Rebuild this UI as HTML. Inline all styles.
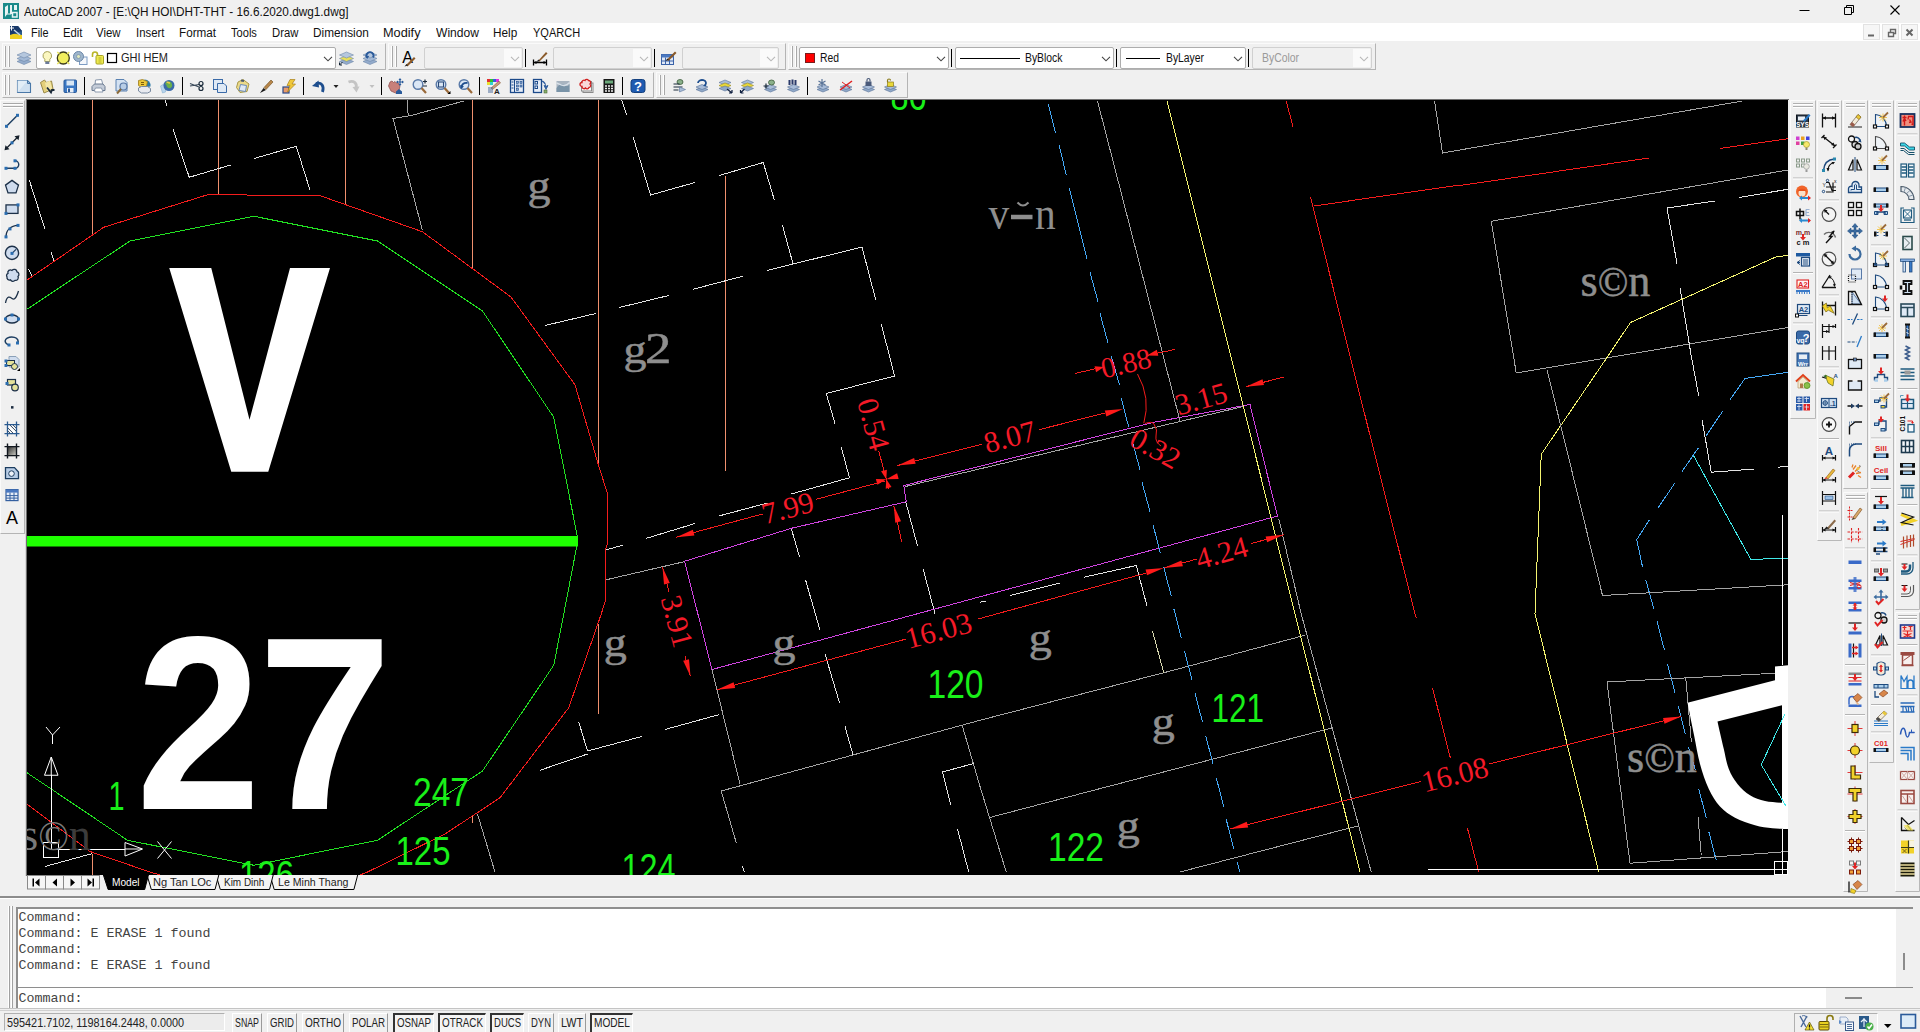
<!DOCTYPE html>
<html><head><meta charset="utf-8"><title>AutoCAD 2007</title>
<style>
html,body{margin:0;padding:0;}
body{width:1920px;height:1032px;overflow:hidden;background:#f0f0f0;position:relative;font-family:"Liberation Sans",sans-serif;}
.t{position:absolute;white-space:pre;line-height:normal;transform-origin:0 50%;display:block;}
.a{position:absolute;}
.dd{position:absolute;background:#fff;border:1px solid #adadad;box-sizing:border-box;border-radius:2px;}
.dd.dis{background:#f0f0f0;border-color:#d0d0d0;}
.sep{position:absolute;width:2px;background:#000;}
.grip{position:absolute;width:2px;border-left:1px solid #fff;border-right:1px solid #a0a0a0;box-sizing:border-box;width:3px;}
svg{position:absolute;overflow:visible;}
.fsa{font-family:"Liberation Sans",sans-serif;}
.fse{font-family:"Liberation Serif",serif;}
.fmo{font-family:"Liberation Mono",monospace;}

</style></head>
<body>
<div class="a" style="left:0;top:0;width:1920px;height:23px;background:#f0f0f0"></div>
<span class="t fsa" style="left:24.30px;top:4.74px;font-size:12px;font-weight:400;color:#111;transform:scaleX(0.9816);">AutoCAD 2007 - [E:\QH HOI\DHT-THT - 16.6.2020.dwg1.dwg]</span>
<svg style="left:1790px;top:0" width="130" height="22" viewBox="0 0 130 22"><path d="M9.5 10.5h10" stroke="#000" stroke-width="1" fill="none"/><path d="M54.5 7.5h7v7h-7z M56.5 7.5v-2h7v7h-2" stroke="#000" stroke-width="1" fill="none"/><path d="M100.5 5.5l9 9M109.5 5.5l-9 9" stroke="#000" stroke-width="1.1" fill="none"/></svg>
<div class="a" style="left:0;top:23px;width:1920px;height:18px;background:#fff"></div>
<span class="t fsa" style="left:30.50px;top:25.84px;font-size:12px;font-weight:400;color:#111;transform:scaleX(0.9050);">File</span>
<span class="t fsa" style="left:62.50px;top:25.84px;font-size:12px;font-weight:400;color:#111;transform:scaleX(0.9430);">Edit</span>
<span class="t fsa" style="left:96.30px;top:25.84px;font-size:12px;font-weight:400;color:#111;transform:scaleX(0.9499);">View</span>
<span class="t fsa" style="left:135.80px;top:25.84px;font-size:12px;font-weight:400;color:#111;transform:scaleX(0.9463);">Insert</span>
<span class="t fsa" style="left:178.70px;top:25.84px;font-size:12px;font-weight:400;color:#111;transform:scaleX(0.9762);">Format</span>
<span class="t fsa" style="left:230.80px;top:25.84px;font-size:12px;font-weight:400;color:#111;transform:scaleX(0.9245);">Tools</span>
<span class="t fsa" style="left:271.70px;top:25.84px;font-size:12px;font-weight:400;color:#111;transform:scaleX(0.9392);">Draw</span>
<span class="t fsa" style="left:312.50px;top:25.84px;font-size:12px;font-weight:400;color:#111;transform:scaleX(0.9843);">Dimension</span>
<span class="t fsa" style="left:383.30px;top:25.84px;font-size:12px;font-weight:400;color:#111;transform:scaleX(1.0610);">Modify</span>
<span class="t fsa" style="left:435.80px;top:25.84px;font-size:12px;font-weight:400;color:#111;transform:scaleX(1.0052);">Window</span>
<span class="t fsa" style="left:493.30px;top:25.84px;font-size:12px;font-weight:400;color:#111;transform:scaleX(0.9806);">Help</span>
<span class="t fsa" style="left:532.50px;top:25.84px;font-size:12px;font-weight:400;color:#111;transform:scaleX(0.9194);">YQARCH</span>
<svg style="left:1860px;top:23px" width="60" height="18" viewBox="0 0 60 18"><rect x="3.5" y="1.5" width="16" height="15" fill="#f6f6f6" stroke="#e2e2e2"/><rect x="22.5" y="1.5" width="16" height="15" fill="#f6f6f6" stroke="#e2e2e2"/><rect x="41.5" y="1.5" width="16" height="15" fill="#f6f6f6" stroke="#e2e2e2"/><path d="M8 12.5h6" stroke="#666" stroke-width="2"/><path d="M28.5 9.5h5v4h-5z M30.5 9v-2.5h5v4h-2" stroke="#666" stroke-width="1.4" fill="none"/><path d="M46.5 6.5l6 6M52.5 6.5l-6 6" stroke="#666" stroke-width="2"/></svg>
<div class="a" style="left:2px;top:43px;width:384px;height:27px;box-sizing:border-box;border-right:1px solid #b4b4b4;border-bottom:1px solid #b4b4b4;border-left:1px solid #fafafa;border-top:1px solid #fafafa"></div>
<div class="a" style="left:4px;top:46px;width:1px;height:21px;background:#fff"></div><div class="a" style="left:5px;top:46px;width:1px;height:21px;background:#a8a8a8"></div><div class="a" style="left:8px;top:46px;width:1px;height:21px;background:#fff"></div><div class="a" style="left:9px;top:46px;width:1px;height:21px;background:#a8a8a8"></div>
<div class="dd" style="left:36px;top:47px;width:300px;height:22px"></div>
<svg style="left:322.5px;top:55.5px" width="10" height="6" viewBox="0 0 10 6"><path d="M1 0.8l4 4l4-4" stroke="#444" stroke-width="1.1" fill="none"/></svg>
<span class="t fsa" style="left:121.00px;top:51.14px;font-size:12px;font-weight:400;color:#222;transform:scaleX(0.9156);">GHI HEM</span>
<div class="a" style="left:388px;top:43px;width:398px;height:27px;box-sizing:border-box;border-right:1px solid #b4b4b4;border-bottom:1px solid #b4b4b4;border-left:1px solid #fafafa;border-top:1px solid #fafafa"></div>
<div class="a" style="left:391px;top:46px;width:1px;height:21px;background:#fff"></div><div class="a" style="left:392px;top:46px;width:1px;height:21px;background:#a8a8a8"></div><div class="a" style="left:395px;top:46px;width:1px;height:21px;background:#fff"></div><div class="a" style="left:396px;top:46px;width:1px;height:21px;background:#a8a8a8"></div>
<div class="dd dis" style="left:424px;top:47px;width:99px;height:22px"></div>
<div class="a" style="left:504px;top:49px;width:17px;height:18px;background:#fafafa"></div>
<svg style="left:509.5px;top:55.5px" width="10" height="6" viewBox="0 0 10 6"><path d="M1 0.8l4 4l4-4" stroke="#b8b8b8" stroke-width="1.1" fill="none"/></svg>
<div class="a" style="left:525px;top:49px;width:1px;height:18px;background:#000"></div>
<div class="dd dis" style="left:553px;top:47px;width:99px;height:22px"></div>
<div class="a" style="left:633px;top:49px;width:17px;height:18px;background:#fafafa"></div>
<svg style="left:638.5px;top:55.5px" width="10" height="6" viewBox="0 0 10 6"><path d="M1 0.8l4 4l4-4" stroke="#b8b8b8" stroke-width="1.1" fill="none"/></svg>
<div class="a" style="left:654px;top:49px;width:1px;height:18px;background:#000"></div>
<div class="dd dis" style="left:682px;top:47px;width:97px;height:22px"></div>
<div class="a" style="left:760px;top:49px;width:17px;height:18px;background:#fafafa"></div>
<svg style="left:765.5px;top:55.5px" width="10" height="6" viewBox="0 0 10 6"><path d="M1 0.8l4 4l4-4" stroke="#b8b8b8" stroke-width="1.1" fill="none"/></svg>
<div class="a" style="left:788px;top:43px;width:588px;height:27px;box-sizing:border-box;border-right:1px solid #b4b4b4;border-bottom:1px solid #b4b4b4;border-left:1px solid #fafafa;border-top:1px solid #fafafa"></div>
<div class="a" style="left:791px;top:46px;width:1px;height:21px;background:#fff"></div><div class="a" style="left:792px;top:46px;width:1px;height:21px;background:#a8a8a8"></div><div class="a" style="left:795px;top:46px;width:1px;height:21px;background:#fff"></div><div class="a" style="left:796px;top:46px;width:1px;height:21px;background:#a8a8a8"></div>
<div class="dd" style="left:799px;top:47px;width:150px;height:22px"></div>
<svg style="left:935.5px;top:55.5px" width="10" height="6" viewBox="0 0 10 6"><path d="M1 0.8l4 4l4-4" stroke="#444" stroke-width="1.1" fill="none"/></svg>
<div class="a" style="left:805px;top:53px;width:10px;height:10px;background:#f00;border:1px solid #7a1c1c;box-sizing:border-box"></div>
<span class="t fsa" style="left:819.50px;top:50.94px;font-size:12px;font-weight:400;color:#111;transform:scaleX(0.8631);">Red</span>
<div class="a" style="left:951px;top:49px;width:1px;height:18px;background:#000"></div>
<div class="dd" style="left:955px;top:47px;width:159px;height:22px"></div>
<svg style="left:1100.5px;top:55.5px" width="10" height="6" viewBox="0 0 10 6"><path d="M1 0.8l4 4l4-4" stroke="#444" stroke-width="1.1" fill="none"/></svg>
<div class="a" style="left:960px;top:58px;width:60px;height:1px;background:#000"></div>
<span class="t fsa" style="left:1025.30px;top:50.94px;font-size:12px;font-weight:400;color:#111;transform:scaleX(0.8651);">ByBlock</span>
<div class="a" style="left:1116px;top:49px;width:1px;height:18px;background:#000"></div>
<div class="dd" style="left:1120px;top:47px;width:126px;height:22px"></div>
<svg style="left:1232.5px;top:55.5px" width="10" height="6" viewBox="0 0 10 6"><path d="M1 0.8l4 4l4-4" stroke="#444" stroke-width="1.1" fill="none"/></svg>
<div class="a" style="left:1126px;top:58px;width:34px;height:1px;background:#000"></div>
<span class="t fsa" style="left:1166.00px;top:50.94px;font-size:12px;font-weight:400;color:#111;transform:scaleX(0.8632);">ByLayer</span>
<div class="a" style="left:1248px;top:49px;width:1px;height:18px;background:#000"></div>
<div class="dd dis" style="left:1252px;top:47px;width:120px;height:22px"></div>
<div class="a" style="left:1353px;top:49px;width:17px;height:18px;background:#fafafa"></div>
<svg style="left:1358.5px;top:55.5px" width="10" height="6" viewBox="0 0 10 6"><path d="M1 0.8l4 4l4-4" stroke="#b8b8b8" stroke-width="1.1" fill="none"/></svg>
<span class="t fsa" style="left:1262.00px;top:50.94px;font-size:12px;font-weight:400;color:#9a9a9a;transform:scaleX(0.8669);">ByColor</span>
<div class="a" style="left:2px;top:72px;width:652px;height:26px;box-sizing:border-box;border-right:1px solid #b4b4b4;border-bottom:1px solid #b4b4b4;border-left:1px solid #fafafa;border-top:1px solid #fafafa"></div>
<div class="a" style="left:4px;top:75px;width:1px;height:20px;background:#fff"></div><div class="a" style="left:5px;top:75px;width:1px;height:20px;background:#a8a8a8"></div><div class="a" style="left:8px;top:75px;width:1px;height:20px;background:#fff"></div><div class="a" style="left:9px;top:75px;width:1px;height:20px;background:#a8a8a8"></div>
<div class="a" style="left:656px;top:72px;width:252px;height:26px;box-sizing:border-box;border-right:1px solid #b4b4b4;border-bottom:1px solid #b4b4b4;border-left:1px solid #fafafa;border-top:1px solid #fafafa"></div>
<div class="a" style="left:659px;top:75px;width:1px;height:20px;background:#fff"></div><div class="a" style="left:660px;top:75px;width:1px;height:20px;background:#a8a8a8"></div><div class="a" style="left:663px;top:75px;width:1px;height:20px;background:#fff"></div><div class="a" style="left:664px;top:75px;width:1px;height:20px;background:#a8a8a8"></div>
<div class="a" style="left:84px;top:77px;width:1px;height:18px;background:#000"></div>
<div class="a" style="left:182px;top:77px;width:1px;height:18px;background:#000"></div>
<div class="a" style="left:303px;top:77px;width:1px;height:18px;background:#000"></div>
<div class="a" style="left:381px;top:77px;width:1px;height:18px;background:#000"></div>
<div class="a" style="left:479px;top:77px;width:1px;height:18px;background:#000"></div>
<div class="a" style="left:622px;top:77px;width:1px;height:18px;background:#000"></div>
<div class="a" style="left:807px;top:77px;width:1px;height:18px;background:#000"></div>
<div class="a" style="left:26px;top:99px;width:1763px;height:1px;background:#6e6e6e"></div>
<div class="a" style="left:0px;top:100px;width:25px;height:434px;box-sizing:border-box;border-right:1px solid #b4b4b4;border-bottom:1px solid #b4b4b4;border-left:1px solid #fafafa;border-top:1px solid #fafafa"></div>
<div class="a" style="left:3px;top:103px;width:20px;height:1px;background:#a8a8a8"></div><div class="a" style="left:3px;top:104px;width:20px;height:1px;background:#fff"></div><div class="a" style="left:3px;top:106px;width:20px;height:1px;background:#a8a8a8"></div><div class="a" style="left:3px;top:107px;width:20px;height:1px;background:#fff"></div>
<div class="a" style="left:25px;top:99px;width:1px;height:777px;background:#d8d8d8"></div><div class="a" style="left:26px;top:99px;width:1px;height:777px;background:#6e6e6e"></div>
<div class="a" style="left:27px;top:875px;width:1761px;height:16px;background:#f0f0f0"></div>
<svg style="left:27px;top:875px" width="340" height="16" viewBox="0 0 340 16"><g fill="#f6f6f6" stroke="#8a8a8a" stroke-width="1"><rect x="0.5" y="0.5" width="18" height="13.5"/><rect x="18.5" y="0.5" width="18" height="13.5"/><rect x="36.5" y="0.5" width="18" height="13.5"/><rect x="54.5" y="0.5" width="18" height="13.5"/></g><g fill="#000"><path d="M5.500 3.500h1.500v8H5.500z M12.500 3.500v8l-4.500-4z"/><path d="M30 3.500v8l-4.500-4z"/><path d="M43.500 3.500v8l4.500-4z"/><path d="M60.500 3.500v8l4.500-4z M65.500 3.500h1.500v8H65.500z"/></g><path d="M243 0L247.200 14.500H326.900L330.700 0" fill="#f4f4f4" stroke="#000"/><path d="M189 0L193.300 14.500H242.500L246.200 0" fill="#f4f4f4" stroke="#000"/><path d="M120 0L124.300 14.500H188L191.800 0" fill="#f4f4f4" stroke="#000"/><path d="M76.400 0L81.100 14.500H117.700L121.400 0z" fill="#000" stroke="#000"/></svg>
<span class="t fsa" style="left:111.90px;top:875.84px;font-size:11px;font-weight:400;color:#fff;transform:scaleX(0.9212);">Model</span>
<span class="t fsa" style="left:152.60px;top:875.84px;font-size:11px;font-weight:400;color:#222;transform:scaleX(1.0089);">Ng Tan LOc</span>
<span class="t fsa" style="left:223.50px;top:875.84px;font-size:11px;font-weight:400;color:#222;transform:scaleX(0.9054);">Kim Dinh</span>
<span class="t fsa" style="left:277.90px;top:875.84px;font-size:11px;font-weight:400;color:#222;transform:scaleX(0.9620);">Le Minh Thang</span>
<div class="a" style="left:0;top:896px;width:1920px;height:2px;background:#8c8c8c"></div>
<div class="a" style="left:0;top:898px;width:1920px;height:1px;background:#fff"></div>
<div class="a" style="left:8px;top:906px;width:1px;height:102px;background:#fff"></div><div class="a" style="left:9px;top:906px;width:1px;height:102px;background:#a0a0a0"></div><div class="a" style="left:11px;top:906px;width:1px;height:102px;background:#fff"></div><div class="a" style="left:12px;top:906px;width:1px;height:102px;background:#a0a0a0"></div>
<div class="a" style="left:16px;top:907px;width:1897px;height:80px;background:#fff;border-top:2px solid #8e8e8e;border-left:2px solid #8e8e8e;box-sizing:border-box"></div>
<div class="a" style="left:16px;top:987px;width:1897px;height:21px;background:#fff;border-top:1px solid #8e8e8e;border-left:2px solid #8e8e8e;box-sizing:border-box"></div>
<div class="a" style="left:0;top:1008px;width:1920px;height:1px;background:#c4c4c4"></div>
<div class="a" style="left:1896px;top:909px;width:17px;height:78px;background:#f0f0f0"></div>
<div class="a" style="left:1903px;top:953px;width:2px;height:17px;background:#8c8c8c"></div>
<div class="a" style="left:1826px;top:988px;width:87px;height:20px;background:#f0f0f0"></div>
<div class="a" style="left:1845px;top:996.5px;width:17px;height:2px;background:#8a8a8a"></div>
<span class="t fmo" style="left:18.50px;top:910.40px;font-size:13.33px;font-weight:400;color:#444;transform:scaleX(1.0000);">Command:</span>
<span class="t fmo" style="left:18.50px;top:926.40px;font-size:13.33px;font-weight:400;color:#444;transform:scaleX(1.0000);">Command: E ERASE 1 found</span>
<span class="t fmo" style="left:18.50px;top:942.40px;font-size:13.33px;font-weight:400;color:#444;transform:scaleX(1.0000);">Command:</span>
<span class="t fmo" style="left:18.50px;top:958.40px;font-size:13.33px;font-weight:400;color:#444;transform:scaleX(1.0000);">Command: E ERASE 1 found</span>
<span class="t fmo" style="left:18.50px;top:990.90px;font-size:13.33px;font-weight:400;color:#444;transform:scaleX(1.0000);">Command:</span>
<div class="a" style="left:0;top:1010px;width:1920px;height:1px;background:#d0d0d0"></div>
<div class="a" style="left:4px;top:1013px;width:221px;height:18px;box-sizing:border-box;border:1px solid #b0b0b0;border-right-color:#fff;border-bottom-color:#fff;background:#ececec"></div>
<span class="t fsa" style="left:7.00px;top:1015.28px;font-size:13.5px;font-weight:400;color:#222;transform:scaleX(0.8029);">595421.7102, 1198164.2448, 0.0000</span>
<div class="a" style="left:232px;top:1013px;width:30px;height:19px;box-sizing:border-box;border-right:1px solid #9a9a9a;border-left:1px solid #fff;border-top:1px solid #fff"></div>
<span class="t fsa" style="left:235.00px;top:1015.28px;font-size:13.5px;font-weight:400;color:#222;transform:scaleX(0.6528);">SNAP</span>
<div class="a" style="left:267px;top:1013px;width:30px;height:19px;box-sizing:border-box;border-right:1px solid #9a9a9a;border-left:1px solid #fff;border-top:1px solid #fff"></div>
<span class="t fsa" style="left:270.00px;top:1015.28px;font-size:13.5px;font-weight:400;color:#222;transform:scaleX(0.7111);">GRID</span>
<div class="a" style="left:302px;top:1013px;width:42px;height:19px;box-sizing:border-box;border-right:1px solid #9a9a9a;border-left:1px solid #fff;border-top:1px solid #fff"></div>
<span class="t fsa" style="left:305.00px;top:1015.28px;font-size:13.5px;font-weight:400;color:#222;transform:scaleX(0.7422);">ORTHO</span>
<div class="a" style="left:349px;top:1013px;width:39px;height:19px;box-sizing:border-box;border-right:1px solid #9a9a9a;border-left:1px solid #fff;border-top:1px solid #fff"></div>
<span class="t fsa" style="left:352.00px;top:1015.28px;font-size:13.5px;font-weight:400;color:#222;transform:scaleX(0.7210);">POLAR</span>
<div class="a" style="left:393px;top:1013px;width:41px;height:19px;box-sizing:border-box;border-left:2px solid #333;border-top:2px solid #333;border-right:1px solid #fff;background:#f4f4f4"></div>
<span class="t fsa" style="left:397.00px;top:1015.28px;font-size:13.5px;font-weight:400;color:#222;transform:scaleX(0.7194);">OSNAP</span>
<div class="a" style="left:438px;top:1013px;width:48px;height:19px;box-sizing:border-box;border-left:2px solid #333;border-top:2px solid #333;border-right:1px solid #fff;background:#f4f4f4"></div>
<span class="t fsa" style="left:442.00px;top:1015.28px;font-size:13.5px;font-weight:400;color:#222;transform:scaleX(0.7288);">OTRACK</span>
<div class="a" style="left:490px;top:1013px;width:34px;height:19px;box-sizing:border-box;border-left:2px solid #333;border-top:2px solid #333;border-right:1px solid #fff;background:#f4f4f4"></div>
<span class="t fsa" style="left:494.00px;top:1015.28px;font-size:13.5px;font-weight:400;color:#222;transform:scaleX(0.7058);">DUCS</span>
<div class="a" style="left:528px;top:1013px;width:26px;height:19px;box-sizing:border-box;border-right:1px solid #9a9a9a;border-left:1px solid #fff;border-top:1px solid #fff"></div>
<span class="t fsa" style="left:531.00px;top:1015.28px;font-size:13.5px;font-weight:400;color:#222;transform:scaleX(0.7017);">DYN</span>
<div class="a" style="left:558px;top:1013px;width:28px;height:19px;box-sizing:border-box;border-right:1px solid #9a9a9a;border-left:1px solid #fff;border-top:1px solid #fff"></div>
<span class="t fsa" style="left:561.00px;top:1015.28px;font-size:13.5px;font-weight:400;color:#222;transform:scaleX(0.8002);">LWT</span>
<div class="a" style="left:590px;top:1013px;width:43px;height:19px;box-sizing:border-box;border-left:2px solid #333;border-top:2px solid #333;border-right:1px solid #fff;background:#f4f4f4"></div>
<span class="t fsa" style="left:594.00px;top:1015.28px;font-size:13.5px;font-weight:400;color:#222;transform:scaleX(0.7499);">MODEL</span>
<div class="a" style="left:1794px;top:1013px;width:84px;height:20px;box-sizing:border-box;border:1px solid #b0b0b0;border-right-color:#fff;border-bottom-color:#fff"></div>
<div class="a" style="left:1788px;top:100px;width:132px;height:792px;background:#f0f0f0"></div>
<svg id="dwg" style="left:27px;top:100px;background:#000;overflow:hidden" width="1761" height="775" viewBox="27 100 1761 775"><path d="M92.50 100.00L92.50 234.00M218.50 100.00L218.50 194.00M345.30 100.00L345.30 204.50M472.50 100.00L472.50 268.00M598.60 100.00L598.60 463.50M725.50 175.50L725.50 471.00M598.30 624.00L598.30 713.50M92.50 853.50L92.50 875.00M472.70 816.00L472.70 823.00" stroke="#f0906e" stroke-width="1" fill="none" shape-rendering="crispEdges"/><path d="M27.00 280.00 L103.75 227.25 L207.50 194.75 L319.50 195.50 L422.50 231.75 L511.00 297.00 L575.00 384.75 L598.00 463.50 L607.00 492.25 L607.00 545.00 L605.00 551.00 L605.00 602.00 L601.25 614.00 L568.75 707.75 L500.00 797.75 L445.00 834.00 L367.50 872.00 L360.00 875.00" stroke="#f41c1c" stroke-width="1" fill="none" shape-rendering="crispEdges" /><path d="M27.00 804.00 L90.00 851.50 L150.00 872.00 L160.00 875.00" stroke="#f41c1c" stroke-width="1" fill="none" shape-rendering="crispEdges" /><path d="M27.00 309.25 L130.00 241.00 L253.75 216.25 L377.50 241.00 L482.50 311.00 L553.75 417.25 L578.00 539.75 L563.75 614.00 L553.75 665.25 L482.50 771.00 L377.50 840.25 L253.75 865.25 L127.50 840.25 L27.00 772.75" stroke="#22e022" stroke-width="1" fill="none" shape-rendering="crispEdges" /><rect x="27" y="536" width="551" height="10.5" fill="#1eff00"/><polygon points="169.25,268 211.25,268 249.5,419.75 290,268 330,268 268.25,471.75 231.25,471.75" fill="#fff"/><text transform="translate(136 809) scale(0.909 1)" font-family="Liberation Sans" font-weight="700" font-size="247" fill="#fff">2</text><text transform="translate(257.85 809) scale(0.9787 1)" font-family="Liberation Sans" font-weight="700" font-size="247" fill="#fff">7</text><path d="M29.25 180.00L44.75 228.75M51.25 252.25L53.75 261.00M28.75 269.25L31.75 276.00M165.00 100.00L166.75 105.50" stroke="#e4e4e4" stroke-width="1" fill="none" shape-rendering="crispEdges"/><path d="M173.00 129.25 L189.25 177.25 L230.75 165.00" stroke="#e4e4e4" stroke-width="1" fill="none" shape-rendering="crispEdges" /><path d="M254.25 158.50 L296.25 146.25 L310.00 190.00" stroke="#e4e4e4" stroke-width="1" fill="none" shape-rendering="crispEdges" /><path d="M407.00 100.00 L408.25 115.50" stroke="#a4a4a4" stroke-width="1" fill="none" shape-rendering="crispEdges" /><path d="M463.75 101.00 L411.25 115.50 L393.00 118.50 L422.50 230.50" stroke="#a4a4a4" stroke-width="1" fill="none" shape-rendering="crispEdges" /><path d="M621.75 100.00L626.75 115.00" stroke="#e4e4e4" stroke-width="1" fill="none" shape-rendering="crispEdges"/><path d="M633.25 137.50 L650.50 195.00 L695.00 182.50" stroke="#e4e4e4" stroke-width="1" fill="none" shape-rendering="crispEdges" /><path d="M719.25 175.50 L763.25 162.50 L774.50 200.50" stroke="#e4e4e4" stroke-width="1" fill="none" shape-rendering="crispEdges" /><path d="M782.50 225.50 L793.00 263.75" stroke="#e4e4e4" stroke-width="1" fill="none" shape-rendering="crispEdges" /><path d="M767.00 270.50 L862.00 247.00 L875.75 300.00" stroke="#e4e4e4" stroke-width="1" fill="none" shape-rendering="crispEdges" /><path d="M693.25 289.25L742.50 276.25M619.25 307.50L668.75 295.50M545.00 325.50L595.75 313.50" stroke="#e4e4e4" stroke-width="1" fill="none" shape-rendering="crispEdges"/><path d="M881.25 324.25 L889.50 356.00 L894.50 376.00 L826.25 393.50 L835.00 423.50" stroke="#e4e4e4" stroke-width="1" fill="none" shape-rendering="crispEdges" /><path d="M841.25 447.25 L849.50 477.75 L791.25 494.00" stroke="#e4e4e4" stroke-width="1" fill="none" shape-rendering="crispEdges" /><path d="M718.75 516.00L767.50 503.00M645.75 538.50L695.00 523.50M606.25 549.75L623.00 545.25M791.25 528.50L799.50 556.75M805.50 579.75L820.00 630.25M905.50 501.00L917.50 546.00M923.25 569.25L935.00 614.00" stroke="#e4e4e4" stroke-width="1" fill="none" shape-rendering="crispEdges"/><path d="M606.25 579.75 L685.00 561.50" stroke="#a4a4a4" stroke-width="1" fill="none" shape-rendering="crispEdges" /><path d="M684.50 561.30 L791.70 528.20 L906.25 501.80 L903.75 485.50 L1152.60 422.50 L1250.00 404.50 L1277.50 516.00 L712.00 669.50 L684.50 561.30" stroke="#d044e0" stroke-width="1" fill="none" shape-rendering="crispEdges" /><path d="M905.00 486.60 L1243.75 406.40" stroke="#a4a4a4" stroke-width="1" fill="none" shape-rendering="crispEdges" /><path d="M712.00 669.50 L740.00 784.00" stroke="#a4a4a4" stroke-width="1" fill="none" shape-rendering="crispEdges" /><path d="M736.25 842.75 L721.25 791.00 L980.00 720.25 L1163.75 672.75 L1305.00 635.25" stroke="#a4a4a4" stroke-width="1" fill="none" shape-rendering="crispEdges" /><path d="M1152.50 631.00 L1163.75 672.75" stroke="#d8d8b0" stroke-width="1" fill="none" shape-rendering="crispEdges" /><path d="M1006.25 872.00 L980.00 786.50 L962.50 726.50" stroke="#a4a4a4" stroke-width="1" fill="none" shape-rendering="crispEdges" /><path d="M988.75 817.75 L1332.50 727.75" stroke="#a4a4a4" stroke-width="1" fill="none" shape-rendering="crispEdges" /><path d="M1180.00 872.00 L1357.50 826.00" stroke="#a4a4a4" stroke-width="1" fill="none" shape-rendering="crispEdges" /><path d="M665.00 729.50L719.50 714.50M825.00 654.00L839.50 702.75M845.00 726.50L853.00 754.50M942.50 772.00L973.75 763.50M942.50 772.00L950.75 805.25M957.50 829.00L968.75 872.00M742.50 866.50L744.25 872.00" stroke="#e4e4e4" stroke-width="1" fill="none" shape-rendering="crispEdges"/><path d="M578.75 722.00 L587.50 751.00 L641.75 736.50" stroke="#e4e4e4" stroke-width="1" fill="none" shape-rendering="crispEdges" /><path d="M540.00 770.25 L587.50 754.00" stroke="#e4e4e4" stroke-width="1" fill="none" shape-rendering="crispEdges" /><path d="M477.50 814.00 L495.00 872.00" stroke="#a4a4a4" stroke-width="1" fill="none" shape-rendering="crispEdges" /><path d="M45.00 866.50 L92.50 853.50" stroke="#e4e4e4" stroke-width="1" fill="none" shape-rendering="crispEdges" /><path d="M1083.75 577.25 L1136.25 565.50 L1147.00 606.00" stroke="#e4e4e4" stroke-width="1" fill="none" shape-rendering="crispEdges" /><path d="M1010.00 595.50L1060.00 583.00M980.00 602.25L986.25 601.00" stroke="#e4e4e4" stroke-width="1" fill="none" shape-rendering="crispEdges"/><path d="M1097.50 101.00 L1180.00 421.00" stroke="#a4a4a4" stroke-width="1" fill="none" shape-rendering="crispEdges" /><path d="M1167.00 101.00 L1230.75 356.00 L1295.00 614.00 L1360.00 872.00" stroke="#f4f470" stroke-width="1" fill="none" shape-rendering="crispEdges" /><path d="M1278.75 518.50 L1301.25 614.00 L1371.25 872.00" stroke="#a4a4a4" stroke-width="1" fill="none" shape-rendering="crispEdges" /><path d="M1048.25 104.25L1055.50 133.00M1059.25 145.50L1066.25 175.00M1069.25 188.00L1087.00 259.25M1090.00 272.25L1098.00 301.75M1100.00 313.50L1108.00 343.00M1111.25 356.00L1119.50 384.75M1121.25 398.50L1128.75 427.25M1132.50 442.25L1140.00 469.75M1142.00 482.25L1150.00 511.50M1153.00 524.75L1160.50 553.50M1163.75 567.25L1171.25 596.00M1173.75 608.50L1181.25 637.75M1184.50 651.50L1192.00 679.50M1195.00 693.50L1202.50 722.00M1205.75 735.75L1213.00 764.00M1216.25 777.75L1223.75 806.50M1226.25 819.50L1233.75 849.00M1237.00 862.00L1240.00 872.00" stroke="#45a8f5" stroke-width="1" fill="none" shape-rendering="crispEdges"/><path d="M1788.00 372.25 L1745.00 378.50 L1730.00 399.75" stroke="#45a8f5" stroke-width="1" fill="none" shape-rendering="crispEdges" /><path d="M1722.50 411.50L1706.25 435.50M1698.25 448.00L1682.00 471.50M1674.50 483.50L1658.25 507.75M1645.75 579.75L1653.75 608.50M1657.00 621.50L1664.50 650.25M1667.50 664.00L1675.00 692.75M1678.25 706.50L1685.50 734.50M1688.50 747.00L1695.50 770.50M1698.75 789.00L1706.25 817.75M1708.75 831.50L1716.25 860.25" stroke="#45a8f5" stroke-width="1" fill="none" shape-rendering="crispEdges"/><path d="M1649.50 519.75 L1636.75 539.75 L1642.50 566.75" stroke="#45a8f5" stroke-width="1" fill="none" shape-rendering="crispEdges" /><path d="M1286.25 101.00L1293.00 126.75M1415.00 614.00L1416.25 617.75M1432.50 687.75L1450.50 758.50M1467.50 828.50L1478.75 872.00" stroke="#f41c1c" stroke-width="1" fill="none" shape-rendering="crispEdges"/><path d="M1460.00 185.00 L1313.75 206.00" stroke="#f41c1c" stroke-width="1" fill="none" shape-rendering="crispEdges" /><path d="M1310.50 196.75 L1350.00 356.00 L1415.00 614.00" stroke="#f41c1c" stroke-width="1" fill="none" shape-rendering="crispEdges" /><path d="M1460.00 185.50 L1648.75 158.00" stroke="#f41c1c" stroke-width="1" fill="none" shape-rendering="crispEdges" /><path d="M1720.00 148.50 L1788.00 138.75" stroke="#f41c1c" stroke-width="1" fill="none" shape-rendering="crispEdges" /><path d="M1434.50 101.00 L1442.50 153.00 L1742.50 101.00" stroke="#a4a4a4" stroke-width="1" fill="none" shape-rendering="crispEdges" /><path d="M1788.00 170.00 L1491.25 221.25 L1516.25 373.00 L1788.00 327.50" stroke="#a4a4a4" stroke-width="1" fill="none" shape-rendering="crispEdges" /><path d="M1738.75 197.50 L1788.00 189.25" stroke="#e4e4e4" stroke-width="1" fill="none" shape-rendering="crispEdges" /><path d="M1715.00 201.00 L1667.00 208.00 L1677.00 263.50" stroke="#e4e4e4" stroke-width="1" fill="none" shape-rendering="crispEdges" /><path d="M1680.00 288.00 L1691.25 356.00 L1698.75 396.00" stroke="#e4e4e4" stroke-width="1" fill="none" shape-rendering="crispEdges" /><path d="M1702.00 419.75 L1711.25 472.25 L1753.75 469.00" stroke="#e4e4e4" stroke-width="1" fill="none" shape-rendering="crispEdges" /><path d="M1778.00 467.25 L1788.00 466.00" stroke="#e4e4e4" stroke-width="1" fill="none" shape-rendering="crispEdges" /><path d="M1788.00 255.50 L1776.25 256.75 L1630.50 322.50 L1608.00 356.00 L1541.25 454.25 L1535.00 614.00 L1598.75 872.00" stroke="#f4f470" stroke-width="1" fill="none" shape-rendering="crispEdges" /><path d="M1547.00 369.75 L1602.50 595.50 L1788.00 584.75" stroke="#a4a4a4" stroke-width="1" fill="none" shape-rendering="crispEdges" /><path d="M1693.75 456.00 L1750.75 559.25 L1788.00 558.50" stroke="#40e8e8" stroke-width="1" fill="none" shape-rendering="crispEdges" /><path d="M1775.00 673.25 L1607.00 682.00 L1630.00 863.25 L1788.00 851.50" stroke="#a4a4a4" stroke-width="1" fill="none" shape-rendering="crispEdges" /><path d="M1685.75 677.75L1691.40 742.00M1698.00 817.00L1701.25 855.25" stroke="#a4a4a4" stroke-width="1" fill="none" shape-rendering="crispEdges"/><path fill-rule="evenodd" fill="#fff" d="M1687.5 702.75L1775 680.25L1775 666.5L1788 665.25L1788 829C1785.4 828.9 1778.0 828.9 1772.5 828.3C1767.0 827.7 1761.2 827.0 1755.0 825.2C1748.8 823.5 1740.8 820.9 1735.0 817.8C1729.2 814.6 1724.4 811.3 1720.0 806.5C1715.6 801.7 1712.1 796.1 1708.8 789.0C1705.4 781.9 1702.5 773.0 1700.0 764.0C1697.5 755.0 1696.1 745.2 1694.0 735.0C1691.9 724.8 1688.6 708.1 1687.5 702.8Z M1782 802.75L1782 705.25L1717.5 721.5C1718.5 726.1 1721.9 741.1 1723.8 749.0C1725.6 756.9 1726.5 763.2 1728.8 769.0C1731.0 774.8 1734.0 779.6 1737.5 784.0C1741.0 788.4 1745.4 792.4 1750.0 795.2C1754.6 798.1 1759.7 799.8 1765.0 801.0C1770.3 802.2 1779.2 802.5 1782.0 802.8Z"/><path d="M1785.00 714.00 L1761.25 764.75 L1786.25 806.50" stroke="#40e8e8" stroke-width="1" fill="none" shape-rendering="crispEdges" /><path d="M1782.50 514.75L1782.50 665.00M1782.50 829.00L1782.50 875.00M1427.50 869.50L1788.00 869.50" stroke="#fff" stroke-width="1" fill="none" shape-rendering="crispEdges"/><rect x="1774.5" y="861.5" width="13" height="13" fill="none" stroke="#fff" shape-rendering="crispEdges"/><path d="M51.75 775.00 L51.75 849.00 L125.00 849.00" stroke="#fff" stroke-width="1" fill="none" shape-rendering="crispEdges" /><path d="M51.25 757L44.5 775.25L58 775.25Z M51.25 757V775 M125 842.5L142.5 849L125 856Z M125 849H142" fill="none" stroke="#fff" stroke-width="1"/><rect x="43.5" y="842.5" width="15" height="15" fill="none" stroke="#fff"/><path d="M46 727L52.5 735L60 727M52.5 735V744 M157.5 841.5L171.5 858.5M171.5 841.5L157.5 858.5" fill="none" stroke="#fff" stroke-width="1"/><text transform="translate(527.50 198.80) scale(1.18 1)" font-family="Liberation Serif" font-size="39" fill="#8e8e8e" stroke="#8e8e8e" stroke-width="0.5">g</text><text transform="translate(603.75 656.10) scale(1.18 1)" font-family="Liberation Serif" font-size="39" fill="#8e8e8e" stroke="#8e8e8e" stroke-width="0.5">g</text><text transform="translate(772.50 656.10) scale(1.18 1)" font-family="Liberation Serif" font-size="39" fill="#8e8e8e" stroke="#8e8e8e" stroke-width="0.5">g</text><text transform="translate(1028.75 650.60) scale(1.18 1)" font-family="Liberation Serif" font-size="39" fill="#8e8e8e" stroke="#8e8e8e" stroke-width="0.5">g</text><text transform="translate(1151.75 734.80) scale(1.18 1)" font-family="Liberation Serif" font-size="39" fill="#8e8e8e" stroke="#8e8e8e" stroke-width="0.5">g</text><text transform="translate(1116.75 838.60) scale(1.18 1)" font-family="Liberation Serif" font-size="39" fill="#8e8e8e" stroke="#8e8e8e" stroke-width="0.5">g</text><text transform="translate(623.60 363.30) scale(1.18 1)" font-family="Liberation Serif" font-size="39" fill="#8e8e8e" stroke="#8e8e8e" stroke-width="0.5">g</text><text transform="translate(645.00 363.00) scale(1.2 1)" font-family="Liberation Serif" font-size="44" fill="#8e8e8e" stroke="#8e8e8e" stroke-width="0.5">2</text><text transform="translate(1580.50 295.50) scale(0.96 1)" font-family="Liberation Serif" font-size="46" fill="#8e8e8e" stroke="#8e8e8e" stroke-width="0.5">s<tspan font-size="42">©</tspan>n</text><text transform="translate(1627.00 772.00) scale(0.96 1)" font-family="Liberation Serif" font-size="46" fill="#8e8e8e" stroke="#8e8e8e" stroke-width="0.5">s<tspan font-size="42">©</tspan>n</text><text transform="translate(21 850) scale(0.96 1)" font-family="Liberation Serif" font-size="46" fill="#7a7a7a">s<tspan font-size="42">©</tspan><tspan fill="#3c3c3c">n</tspan></text><text transform="translate(988.50 228.50) rotate(0) scale(0.9 1)" font-family="Liberation Serif" font-size="46" font-weight="400" fill="#8e8e8e" text-anchor="start">v</text><text transform="translate(1035.00 228.50) rotate(0) scale(0.9 1)" font-family="Liberation Serif" font-size="46" font-weight="400" fill="#8e8e8e" text-anchor="start">n</text><path d="M1011 217H1032.500" stroke="#8e8e8e" stroke-width="4.5"/><path d="M1017.5 202.5Q1023 208.500 1028.500 202.500" stroke="#8e8e8e" stroke-width="2" fill="none"/><text transform="translate(927.50 698.00) rotate(0) scale(0.8391 1)" font-family="Liberation Sans" font-size="40" font-weight="400" fill="#19f019" text-anchor="start">120</text><text transform="translate(1211.50 722.00) rotate(0) scale(0.7866 1)" font-family="Liberation Sans" font-size="40" font-weight="400" fill="#19f019" text-anchor="start">121</text><text transform="translate(1048.00 860.50) rotate(0) scale(0.8391 1)" font-family="Liberation Sans" font-size="40" font-weight="400" fill="#19f019" text-anchor="start">122</text><text transform="translate(621.50 881.50) rotate(0) scale(0.8091 1)" font-family="Liberation Sans" font-size="40" font-weight="400" fill="#19f019" text-anchor="start">124</text><text transform="translate(395.50 865.00) rotate(0) scale(0.8241 1)" font-family="Liberation Sans" font-size="40" font-weight="400" fill="#19f019" text-anchor="start">125</text><text transform="translate(239.00 888.50) rotate(0) scale(0.8241 1)" font-family="Liberation Sans" font-size="40" font-weight="400" fill="#19f019" text-anchor="start">126</text><text transform="translate(413.00 805.50) rotate(0) scale(0.8391 1)" font-family="Liberation Sans" font-size="40" font-weight="400" fill="#19f019" text-anchor="start">247</text><text transform="translate(108.50 809.50) rotate(0) scale(0.7192 1)" font-family="Liberation Sans" font-size="40" font-weight="400" fill="#19f019" text-anchor="start">1</text><text transform="translate(890.50 109.50) rotate(0) scale(0.8091 1)" font-family="Liberation Sans" font-size="40" font-weight="400" fill="#19f019" text-anchor="start">86</text><path d="M676.25 537.25 L762.50 514.00" stroke="#f41c1c" stroke-width="1" fill="none" shape-rendering="crispEdges" /><path d="M816.25 499.25 L885.00 481.00" stroke="#f41c1c" stroke-width="1" fill="none" shape-rendering="crispEdges" /><polygon points="676.25,537.25 692.86,529.69 694.41,535.49" fill="#ff1a1a"/><text transform="translate(765.00 524.50) rotate(-15) scale(1 1)" font-family="Liberation Serif" font-size="30" font-weight="400" fill="#f41a28" text-anchor="start">7.99</text><path d="M878.75 451.00 L888.75 488.50" stroke="#f41c1c" stroke-width="1" fill="none" shape-rendering="crispEdges" /><path d="M893.75 505.50 L901.75 542.25" stroke="#f41c1c" stroke-width="1" fill="none" shape-rendering="crispEdges" /><polygon points="886.30,479.20 881.07,471.28 886.87,469.73" fill="#ff1a1a"/><polygon points="886.30,479.20 891.53,487.12 885.73,488.67" fill="#ff1a1a"/><polygon points="893.75,505.50 901.05,521.14 895.25,522.70" fill="#ff1a1a"/><text transform="translate(857.00 401.50) rotate(75) scale(1 1)" font-family="Liberation Serif" font-size="30" font-weight="400" fill="#f41a28" text-anchor="start">0.54</text><polygon points="886.30,479.20 877.42,484.69 875.86,478.89" fill="#ff1a1a"/><polygon points="886.30,479.20 897.11,473.20 898.67,478.99" fill="#ff1a1a"/><polygon points="897.50,465.50 914.11,457.94 915.66,463.74" fill="#ff1a1a"/><path d="M897.50 465.50 L982.00 444.20" stroke="#f41c1c" stroke-width="1" fill="none" shape-rendering="crispEdges" /><text transform="translate(987.00 453.50) rotate(-15) scale(1 1)" font-family="Liberation Serif" font-size="30" font-weight="400" fill="#f41a28" text-anchor="start">8.07</text><path d="M1038.75 429.75 L1105.00 413.00" stroke="#f41c1c" stroke-width="1" fill="none" shape-rendering="crispEdges" /><polygon points="1123.00,409.00 1106.32,416.41 1104.82,410.60" fill="#ff1a1a"/><path d="M1075.00 373.50 L1095.00 368.80" stroke="#f41c1c" stroke-width="1" fill="none" shape-rendering="crispEdges" /><polygon points="1104.00,367.00 1096.04,372.16 1094.54,366.35" fill="#ff1a1a"/><polygon points="1146.90,355.50 1156.80,349.84 1158.30,355.65" fill="#ff1a1a"/><path d="M1146.90 355.50 L1174.60 349.50" stroke="#f41c1c" stroke-width="1" fill="none" shape-rendering="crispEdges" /><text transform="translate(1103.50 378.50) rotate(-13) scale(1 1)" font-family="Liberation Serif" font-size="29" font-weight="400" fill="#f41a28" text-anchor="start">0.88</text><path d="M1137.5 374Q1151 398 1143.800 423.200" stroke="#f41c1c" fill="none"/><text transform="translate(1178.50 415.50) rotate(-15.5) scale(1 1)" font-family="Liberation Serif" font-size="30" font-weight="400" fill="#f41a28" text-anchor="start">3.15</text><polygon points="1245.80,386.70 1262.48,379.29 1263.98,385.10" fill="#ff1a1a"/><path d="M1245.80 386.70 L1283.60 377.20" stroke="#f41c1c" stroke-width="1" fill="none" shape-rendering="crispEdges" /><text transform="translate(1127.50 444.50) rotate(29) scale(1 1)" font-family="Liberation Serif" font-size="30" font-weight="400" fill="#f41a28" text-anchor="start">0.32</text><path d="M1145 423.500Q1152 421 1154 424Q1158 430 1156 436Q1155 442 1161 446" stroke="#f41c1c" fill="none"/><text transform="translate(1199.00 569.50) rotate(-15.5) scale(1 1)" font-family="Liberation Serif" font-size="30" font-weight="400" fill="#f41a28" text-anchor="start">4.24</text><path d="M1251.25 543.50 L1283.75 534.75" stroke="#f41c1c" stroke-width="1" fill="none" shape-rendering="crispEdges" /><polygon points="1283.75,534.75 1267.14,542.31 1265.59,536.51" fill="#ff1a1a"/><polygon points="1163.75,568.00 1147.01,575.27 1145.56,569.44" fill="#ff1a1a"/><polygon points="1163.75,568.00 1181.46,560.49 1182.91,566.31" fill="#ff1a1a"/><path d="M1163.75 568.00 L1197.00 559.00" stroke="#f41c1c" stroke-width="1" fill="none" shape-rendering="crispEdges" /><path d="M717.00 689.75 L906.25 639.00" stroke="#f41c1c" stroke-width="1" fill="none" shape-rendering="crispEdges" /><path d="M978.00 619.00 L1146.25 573.00" stroke="#f41c1c" stroke-width="1" fill="none" shape-rendering="crispEdges" /><polygon points="717.00,689.75 733.61,682.19 735.16,687.99" fill="#ff1a1a"/><text transform="translate(908.50 649.00) rotate(-15) scale(1 1)" font-family="Liberation Serif" font-size="30" font-weight="400" fill="#f41a28" text-anchor="start">16.03</text><polygon points="662.50,567.25 669.80,582.89 664.00,584.45" fill="#ff1a1a"/><path d="M662.50 567.25 L669.00 592.00" stroke="#f41c1c" stroke-width="1" fill="none" shape-rendering="crispEdges" /><polygon points="690.50,676.50 683.20,660.86 689.00,659.30" fill="#ff1a1a"/><path d="M685.00 656.00 L690.50 676.50" stroke="#f41c1c" stroke-width="1" fill="none" shape-rendering="crispEdges" /><text transform="translate(660.50 598.50) rotate(75) scale(1 1)" font-family="Liberation Serif" font-size="30" font-weight="400" fill="#f41a28" text-anchor="start">3.91</text><path d="M1230.00 829.00 L1421.25 781.50" stroke="#f41c1c" stroke-width="1" fill="none" shape-rendering="crispEdges" /><path d="M1488.75 764.00 L1681.25 716.50" stroke="#f41c1c" stroke-width="1" fill="none" shape-rendering="crispEdges" /><polygon points="1230.00,829.00 1246.74,821.73 1248.19,827.56" fill="#ff1a1a"/><polygon points="1681.25,716.50 1664.51,723.77 1663.06,717.94" fill="#ff1a1a"/><text transform="translate(1424.50 792.50) rotate(-14) scale(1 1)" font-family="Liberation Serif" font-size="30" font-weight="400" fill="#f41a28" text-anchor="start">16.08</text></svg>
<svg style="left:0;top:0;pointer-events:none" width="1920" height="1032" viewBox="0 0 1920 1032"><g transform="translate(4.0 112.8)"><path d="M2.5 13.500L13.500 2.500" stroke="#1c3d60" stroke-width="1.4"/><rect x="1.0" y="12.0" width="3" height="3" fill="#2a6db0"/><rect x="12.0" y="1.0" width="3" height="3" fill="#2a6db0"/></g><g transform="translate(4.0 134.8)"><path d="M2 14L14 2" stroke="#16202c" stroke-width="1.3"/><path d="M0.5 15.500l1-5l4 4z M15.500 0.500l-1 5l-4-4z" fill="#16202c"/><rect x="6.5" y="6.5" width="3" height="3" fill="#2a6db0"/></g><g transform="translate(4.0 156.8)"><path d="M2 11.500H11A3.700 3.700 0 0 0 11 4" stroke="#1c3d60" stroke-width="1.4" fill="none"/><rect x="0.5" y="10.0" width="3" height="3" fill="#2a6db0"/><rect x="9.5" y="10.0" width="3" height="3" fill="#2a6db0"/><rect x="9.5" y="2.5" width="3" height="3" fill="#2a6db0"/></g><g transform="translate(4.0 178.9)"><path d="M8 1.500L14.500 6.200L12 14H4L1.500 6.200Z" fill="#cfdcee" stroke="#1c3048" stroke-width="1.3"/></g><g transform="translate(4.0 200.9)"><rect x="2" y="4" width="12" height="8.5" fill="#cfdcee" stroke="#1c3048" stroke-width="1.3"/><rect x="0.5" y="11.0" width="3" height="3" fill="#2a6db0"/><rect x="12.5" y="2.5" width="3" height="3" fill="#2a6db0"/></g><g transform="translate(4.0 222.9)"><path d="M2 14C2 7 7 3 14 2.500" stroke="#1c3048" stroke-width="1.4" fill="none"/><rect x="0.5" y="12.5" width="3" height="3" fill="#2a6db0"/><rect x="4.5" y="4.5" width="3" height="3" fill="#2a6db0"/><rect x="12.5" y="1.0" width="3" height="3" fill="#2a6db0"/></g><g transform="translate(4.0 244.9)"><circle cx="8" cy="8" r="6.6" fill="#cfdcee" stroke="#1c3048" stroke-width="1.4"/><path d="M8 8.500L12 4.500" stroke="#1c3d60" stroke-width="1.2"/><rect x="6.5" y="7.0" width="3" height="3" fill="#2a6db0"/></g><g transform="translate(4.0 266.9)"><path d="M4 6.500A2.600 2.600 0 0 1 8 3.500A2.800 2.800 0 0 1 13 5A2.600 2.600 0 0 1 14 9.500A2.800 2.800 0 0 1 11 13.500A2.800 2.800 0 0 1 6.500 13A2.600 2.600 0 0 1 3 10A2.300 2.300 0 0 1 4 6.500Z" fill="#cfdcee" stroke="#1c3048" stroke-width="1.3"/></g><g transform="translate(4.0 289.0)"><path d="M1.500 14C3 6 6 8 8 9.500S12 10 14.500 2" stroke="#1c3048" stroke-width="1.3" fill="none"/></g><g transform="translate(4.0 311.0)"><ellipse cx="8" cy="8" rx="6.5" ry="4" fill="#cfdcee" stroke="#1c3048" stroke-width="1.4"/><rect x="0.0" y="6.5" width="3" height="3" fill="#2a6db0"/><rect x="13.0" y="6.5" width="3" height="3" fill="#2a6db0"/><rect x="6.5" y="2.5" width="3" height="3" fill="#2a6db0"/></g><g transform="translate(4.0 333.0)"><path d="M5 12A6.500 4.200 0 1 1 13.500 10" fill="none" stroke="#1c3d60" stroke-width="1.5"/><rect x="3.5" y="10.5" width="3" height="3" fill="#2a6db0"/><rect x="12.0" y="8.5" width="3" height="3" fill="#2a6db0"/></g><g transform="translate(4.0 355.0)"><path d="M5 1.500H12L15 4.500V12H5z" fill="#cfdcee" stroke="#8aa0b8"/><rect x="2.5" y="5.500" width="8" height="5" fill="#e4e29a" stroke="#1c3048"/><circle cx="10.500" cy="11.500" r="3" fill="#e4e29a" stroke="#1c3048"/><rect x="0.5" y="4.5" width="3" height="3" fill="#2a6db0"/><rect x="0.5" y="9.0" width="3" height="3" fill="#2a6db0"/><path d="M16 13v3h-3z" fill="#000"/></g><g transform="translate(4.0 377.0)"><rect x="3.500" y="2.500" width="8" height="5.500" fill="#e4e29a" stroke="#1c3048" stroke-width="1.200"/><circle cx="11" cy="10.500" r="3.300" fill="#e4e29a" stroke="#1c3048" stroke-width="1.200"/><rect x="1.5" y="5.0" width="3" height="3" fill="#2a6db0"/></g><g transform="translate(4.0 399.1)"><rect x="7" y="7" width="2.500" height="2.500" fill="#1c2c40"/></g><g transform="translate(4.0 421.1)"><rect x="3" y="3" width="10" height="10" fill="#fff"/><path d="M3 6l7 7M3 9l4 4M5 3l8 8M8 3l5 5M11 3l2 2" stroke="#1c3048" stroke-width="0.9"/><path d="M0.500 3.500H15.500M0.500 12.500H15.500M3.500 0.500V15.500M12.500 0.500V15.500" stroke="#2a5a90" stroke-width="1.300"/></g><g transform="translate(4.0 443.1)"><defs><linearGradient id="gg" x1="0" y1="0" x2="1" y2="1"><stop offset="0" stop-color="#222"/><stop offset="1" stop-color="#d8d8d0"/></linearGradient></defs><rect x="3" y="3" width="10" height="10" fill="url(#gg)"/><path d="M0.500 3.500H15.500M0.500 12.500H15.500M3.500 0.500V15.500M12.500 0.500V15.500" stroke="#10161e" stroke-width="1.400"/></g><g transform="translate(4.0 465.1)"><path d="M1.500 2.500H10.500L14.500 7V13.500H1.500z" fill="#b8cde6" stroke="#1c3d60" stroke-width="1.300"/><circle cx="7.500" cy="8.500" r="2.800" fill="#eef3fa" stroke="#1c3d60"/></g><g transform="translate(4.0 487.1)"><rect x="2" y="2.500" width="12" height="11" fill="#e8eef8" stroke="#3560a0" stroke-width="1.200"/><rect x="2" y="2.500" width="12" height="3" fill="#4a78c0"/><path d="M2 8.500H14M2 11H14M6 5.500V13.500M10 5.500V13.500" stroke="#3560a0" stroke-width="1"/></g><g transform="translate(4.0 509.2)"><text x="8" y="14.500" font-family="Liberation Sans" font-size="18" text-anchor="middle" fill="#000">A</text></g><g transform="translate(16.0 50.0)"><path d="M8 8.500l7 3l-7 3l-7-3z" fill="#93abcc" stroke="#6d86a8" stroke-width="0.600"/><path d="M8 5.500l7 3l-7 3l-7-3z" fill="#a3b9d6" stroke="#6d86a8" stroke-width="0.600"/><path d="M8 2l7 3l-7 3l-7-3z" fill="#b5c7de" stroke="#6d86a8" stroke-width="0.600"/></g><g transform="translate(39.3 50.0)"><path d="M8 1.500a4.300 4.300 0 0 1 2.500 7.800v2.200h-5v-2.200A4.300 4.300 0 0 1 8 1.500z" fill="#fbf7c0" stroke="#a8a35c" stroke-width="1"/><rect x="6" y="11.500" width="4" height="2.500" fill="#6a7a9a"/></g><g transform="translate(55.3 50.0)"><circle cx="8" cy="8" r="6" fill="#f1ee5e" stroke="#3a3a1a" stroke-width="1.300"/><path d="M2 2l2 2M14 2l-2 2M2 14l2-2M14 14l-2-2" stroke="#e8e45a" stroke-width="1.500"/></g><g transform="translate(72.0 50.0)"><rect x="7.500" y="7" width="7.500" height="7.500" fill="#f4f7fb" stroke="#7d9cc4"/><circle cx="6.500" cy="6.500" r="5" fill="#9eb5cc" stroke="#6b87a8"/><circle cx="6.500" cy="6.500" r="2" fill="#dfe8c0" stroke="#6b87a8" stroke-width="0.600"/></g><g transform="translate(89.5 50.0)"><path d="M3 7V4.500a2.500 2.500 0 0 1 5 0V6" fill="none" stroke="#b9b52a" stroke-width="1.600"/><rect x="6.500" y="5.500" width="7.500" height="8.500" rx="1" fill="#eeea4e" stroke="#a8a428"/><path d="M9 8h3M9 10h3M9 12h3" stroke="#a8a428" stroke-width="0.800"/></g><rect x="107.500" y="53.500" width="9" height="9" fill="#fff" stroke="#000" stroke-width="1.200"/><g transform="translate(338.5 50.0)"><path d="M8 8.500l7 3l-7 3l-7-3z" fill="#93abcc" stroke="#6d86a8" stroke-width="0.600"/><path d="M8 5.500l7 3l-7 3l-7-3z" fill="#e8df5a" stroke="#6d86a8" stroke-width="0.600"/><path d="M8 2l7 3l-7 3l-7-3z" fill="#b5c7de" stroke="#6d86a8" stroke-width="0.600"/><path d="M1 15l3-3M1 15v-2.500M1 15h2.500" stroke="#123" stroke-width="1" fill="none"/></g><g transform="translate(362.0 50.0)"><path d="M8 8.500l7 3l-7 3l-7-3z" fill="#93abcc" stroke="#6d86a8" stroke-width="0.600"/><path d="M8 5.500l7 3l-7 3l-7-3z" fill="#a3b9d6" stroke="#6d86a8" stroke-width="0.600"/><path d="M8 2l7 3l-7 3l-7-3z" fill="#b5c7de" stroke="#6d86a8" stroke-width="0.600"/><path d="M11 7.500a3.500 3.500 0 1 0-6 0" stroke="#2a5a9a" stroke-width="1.800" fill="none"/><path d="M3 5.500l2.200 3.500l2-3z" fill="#2a5a9a"/></g><g transform="translate(401.0 50.0)"><text x="6.500" y="12.500" font-family="Liberation Sans" font-size="16" text-anchor="middle" fill="#000">A</text><path d="M5 15l8-8l1.500 1.500l-8 8z" fill="#8a5a2a"/><path d="M3.500 16.500l2-2.500l1.500 1.500z" fill="#222"/></g><g transform="translate(532.0 50.0)"><path d="M1 12.500h14M1.500 9.500v6M14.500 9.500v6" stroke="#000" stroke-width="1.300"/><path d="M1.500 12.500l3-1.500v3zM14.500 12.500l-3-1.500v3z" fill="#000"/><path d="M6 11l8-9l1.500 1.500l-8 8z" fill="#8a5a2a"/><path d="M4.500 12l1.800-2.500l1.700 1.500z" fill="#222"/></g><g transform="translate(660.0 50.0)"><rect x="1.500" y="4.500" width="12" height="10" fill="#dfe8f6" stroke="#3a62a8"/><rect x="1.500" y="4.500" width="12" height="3" fill="#4a78c0"/><path d="M1.500 11h12M5.500 7.500v7M9.500 7.500v7" stroke="#3a62a8"/><path d="M7 9.500l8-8l1.500 1.500l-8 8z" fill="#8a5a2a"/><path d="M5.500 11l1.800-2.500l1.700 1.500z" fill="#222"/></g><g transform="translate(16.0 78.0)"><path d="M1.500 2.500H11.500L14.500 5.500V14.500H1.500z" fill="#cfe0f0" stroke="#4a78a8" stroke-width="1.100"/><path d="M1.500 14.500L11.500 2.500H1.500z" fill="#e6f0f8" opacity="0.800"/><path d="M11.500 2.500v3h3" fill="none" stroke="#4a78a8"/></g><g transform="translate(39.0 78.0)"><path d="M1.500 4.500l4-2.500l2 2.500l5-1.500l1.500 8l-9 4z" fill="#e4d07a" stroke="#9a8a4a"/><path d="M6 5l5-2.500l2 8l-5 2.500z" fill="#f3e7a8"/><path d="M8 9.500l4 5l1-2.500h2.500" stroke="#1a2a3a" stroke-width="1.800" fill="none"/></g><g transform="translate(62.0 78.0)"><rect x="2" y="2" width="12.500" height="12.500" rx="1" fill="#3b78c4" stroke="#2a5a9a"/><rect x="4.500" y="2.500" width="7.500" height="5" fill="#d8e6f4"/><rect x="5" y="10" width="6.500" height="4.500" fill="#e8eef6"/><rect x="6" y="10.500" width="2" height="3.500" fill="#2a5a9a"/></g><g transform="translate(90.5 78.0)"><path d="M5 2l6-0.500l1.500 5.500h-8z" fill="#fff" stroke="#8a98ac"/><path d="M1.500 8.500l2.500-2.500h8.500l2 2.500v4h-13z" fill="#c4ccd8" stroke="#6a7a90"/><path d="M4 12l1-2h6l1.500 4h-8z" fill="#fff" stroke="#8a98ac"/></g><g transform="translate(113.5 78.0)"><path d="M2.500 1.500H10.500L13.500 4.500V13H2.500z" fill="#d4e2f2" stroke="#5a82b2"/><circle cx="10" cy="8.500" r="3.500" fill="#b8cde6" stroke="#5a7aa8" stroke-width="1.200"/><path d="M7.500 11l-4 4.500" stroke="#8a6a3a" stroke-width="2"/></g><g transform="translate(136.5 78.0)"><path d="M8 1.500a6 6 0 0 1 6 7l-6 1z" fill="#2a7aa8"/><path d="M2 2.500l4-1l5 2l-1 5l-5 1l-3-2z" fill="#ecc83a" stroke="#9a7a1a" stroke-width="0.800"/><path d="M2 10l3-1.500h6l3 2v3l-3 1.500h-6l-3-2z" fill="#e8eaf0" stroke="#7a8aa0"/><path d="M4.500 4.500h3M4.500 6.500h3" stroke="#7a5a0a"/></g><g transform="translate(159.5 78.0)"><path d="M1 8l5-3v9l-3 1z" fill="#b8d4ec" stroke="#8ab0d0" stroke-width="0.600"/><circle cx="9.500" cy="7.500" r="5.500" fill="#3a6aa8"/><path d="M6 5c2-2 5-2 6 0s1 4-1 5s-4-1-4-2.500s-2-1-1-2.500z" fill="#6ab04a"/><path d="M7 4c1.500 0 2 1 3.500 1" stroke="#e8c84a" stroke-width="1.500" fill="none"/></g><g transform="translate(189.0 78.0)"><path d="M1 5.500l9 3.500M1 8l9-1.500" stroke="#3a4a5a" stroke-width="1.200"/><circle cx="12" cy="5.500" r="2" fill="none" stroke="#1a2a3a" stroke-width="1.200"/><circle cx="12" cy="10.500" r="2" fill="none" stroke="#1a2a3a" stroke-width="1.200"/></g><g transform="translate(212.0 78.0)"><rect x="1.500" y="1.500" width="9" height="10" fill="#dfe9f5" stroke="#3a6aa8"/><path d="M5.500 5.500H12L14.500 8V14.500H5.500z" fill="#dfe9f5" stroke="#3a6aa8"/></g><g transform="translate(235.0 78.0)"><path d="M3 4l5-2.500l6 4.500l-2 7.500l-7 1l-3.500-5z" fill="#ead98a" stroke="#a89848"/><path d="M5.500 6.500l6 1l-1 6l-6.500-1z" fill="#dfe9f5" stroke="#6a8ab8"/><path d="M6 2.500l3 0.500" stroke="#4a5a6a" stroke-width="1.800"/></g><g transform="translate(258.0 78.0)"><path d="M2 15l3.500-5l2.500 2z" fill="#1a1a1a"/><path d="M6 9.500l7-7.500l2 2l-7 7.500z" fill="#b8864a" stroke="#6a4a1a" stroke-width="0.600"/></g><g transform="translate(281.0 78.0)"><rect x="2" y="9" width="6" height="6" fill="#e89a6a" stroke="#2a4a8a" stroke-width="1.200"/><path d="M9 1.500h5l-3 4.500h3.500l-8 8l2.500-6.500h-3z" fill="#f0c83a" stroke="#a8801a" stroke-width="0.700"/></g><g transform="translate(310.0 78.0)"><path d="M12.500 14c2-6-1-10-6.500-8.500" stroke="#1e4e8e" stroke-width="2.800" fill="none"/><path d="M2 8l6.500-5.500l0.500 7z" fill="#1e4e8e"/></g><g transform="translate(345.0 78.0)"><path d="M3.500 4c5-2 9 1 7.500 6" stroke="#c4c4c4" stroke-width="2.800" fill="none"/><path d="M14.500 8.500l-3 6l-4-5.500z" fill="#c4c4c4"/></g><g transform="translate(388.0 78.0)"><path d="M2 4l2-1l1.500 1.500l1.500-1l1.500 1.500l1.500-0.500l2 3.500l-1 4.500l-3.500 2.500l-4.500-2l-2.500-5z" fill="#c8807a" stroke="#8a4a4a" stroke-width="0.700"/><path d="M12 1v6M9 4h6" stroke="#2a5a9a" stroke-width="1.200"/><path d="M12 0l1.500 2h-3zM12 8l1.500-2h-3zM8 4l2-1.500v3zM16 4l-2-1.500v3z" fill="#2a5a9a"/><path d="M11 11l3 2.500v2.500h-6v-2.500z" fill="#2a5a9a"/></g><g transform="translate(411.5 78.0)"><circle cx="6.500" cy="6.500" r="4.800" fill="#dbe7f5" stroke="#5a7aa8" stroke-width="1.400"/><path d="M10 10l4.500 5" stroke="#9a6a3a" stroke-width="2.200"/><path d="M11.500 3.500h4M13.500 1.500v4M11.500 8h4" stroke="#1a2a3a" stroke-width="1.200"/></g><g transform="translate(434.5 78.0)"><circle cx="6.500" cy="6.500" r="4.800" fill="#dbe7f5" stroke="#5a7aa8" stroke-width="1.400"/><path d="M10 10l4.500 5" stroke="#9a6a3a" stroke-width="2.200"/><rect x="4" y="4" width="5" height="5" fill="none" stroke="#2a4a7a" stroke-width="1.100"/><path d="M16 13v3h-3z" fill="#000"/></g><g transform="translate(457.5 78.0)"><circle cx="6.500" cy="6.500" r="4.800" fill="#dbe7f5" stroke="#5a7aa8" stroke-width="1.400"/><path d="M10 10l4.500 5" stroke="#9a6a3a" stroke-width="2.200"/><path d="M4 9.500c0-3 2-5 6-4.500" stroke="#1e4e8e" stroke-width="1.800" fill="none"/><path d="M2.500 7l1 4l3-2.500z" fill="#1e4e8e"/></g><g transform="translate(486.0 78.0)"><rect x="1" y="1" width="3" height="3" fill="#e03030"/><rect x="4" y="1" width="3" height="3" fill="#30c030"/><rect x="7" y="1" width="3" height="3" fill="#3060e0"/><rect x="10" y="1" width="3" height="3" fill="#e030e0"/><rect x="1" y="4" width="3" height="3" fill="#e8e030"/><rect x="4" y="4" width="3" height="3" fill="#30d0d0"/><path d="M13 3l-8 7l1.500 1.500l8-6.500z" fill="#c89a7a" stroke="#7a4a2a" stroke-width="0.500"/><text x="8" y="15.500" font-family="Liberation Sans" font-size="8" font-weight="700" fill="#222">A</text><path d="M2 10h5M2 12h5M2 14h5" stroke="#4a6a9a" stroke-width="1.200"/></g><g transform="translate(509.0 78.0)"><rect x="1.500" y="1.500" width="13" height="13" fill="#e6edf7" stroke="#1c4a8a" stroke-width="1.300"/><path d="M5.500 1.500v13" stroke="#1c4a8a"/><rect x="7.500" y="3.500" width="2" height="2" fill="#8aa8d0" stroke="#1c4a8a" stroke-width="0.600"/><rect x="11" y="3.500" width="2" height="2" fill="#8aa8d0" stroke="#1c4a8a" stroke-width="0.600"/><rect x="7.500" y="7" width="2" height="2" fill="#8aa8d0" stroke="#1c4a8a" stroke-width="0.600"/><rect x="11" y="7" width="2" height="2" fill="#8aa8d0" stroke="#1c4a8a" stroke-width="0.600"/><rect x="7.500" y="10.500" width="2" height="2" fill="#8aa8d0" stroke="#1c4a8a" stroke-width="0.600"/><path d="M2.500 4h2M2.500 7h2M2.500 10h2" stroke="#1c4a8a"/></g><g transform="translate(532.0 78.0)"><rect x="1.500" y="1.500" width="8" height="13" fill="#e6edf7" stroke="#1c4a8a" stroke-width="1.300"/><rect x="3" y="3.500" width="2.500" height="2.500" fill="none" stroke="#1c4a8a"/><rect x="3" y="8" width="2.500" height="2.500" fill="none" stroke="#1c4a8a"/><path d="M9.500 3c3 0 4 2 4 5l-1.500-0.500l2 4l2-4l-1.500 0.500" fill="#3a6ab0" stroke="#1c4a8a" stroke-width="0.700"/><rect x="12" y="12" width="3" height="3" fill="#8ab06a" stroke="#4a6a3a" stroke-width="0.600"/></g><g transform="translate(555.0 78.0)"><rect x="1.500" y="3" width="13" height="11" fill="#a8b4c0"/><path d="M1.500 10c3-4 5-5 8-3s4 1 5-1v8h-13z" fill="#7a94a8"/><path d="M1.500 5c3 1 5 3 8 2.500s4-2 5-3" stroke="#d8e0e8" stroke-width="1.500" fill="none"/></g><g transform="translate(578.0 78.0)"><rect x="5" y="5" width="10" height="9.500" fill="#f0f0f0" stroke="#8a8a8a"/><rect x="3.500" y="3.500" width="10" height="9.500" fill="#f8f8f8" stroke="#8a8a8a"/><path d="M4 4.500a2 2 0 0 1 3-2a2 2 0 0 1 3.500 0a2 2 0 0 1 1.500 3.500a2 2 0 0 1-1 3.500a2 2 0 0 1-3.500 0.500a2 2 0 0 1-3.500-1.500a2 2 0 0 1 0-4z" fill="#f8d8d8" stroke="#d02020" stroke-width="1.300"/></g><g transform="translate(601.0 78.0)"><rect x="2.500" y="1" width="11" height="14" fill="#181818"/><rect x="4" y="2.500" width="8" height="3" fill="#6aa87a"/><path d="M4 8h8M4 10.500h8M4 13h8" stroke="#eee" stroke-width="1.500" stroke-dasharray="2 1"/></g><g transform="translate(630.0 78.0)"><rect x="1" y="1.500" width="14" height="13" rx="2.500" fill="#1e5ab0" stroke="#14407e"/><text x="8" y="13" font-family="Liberation Sans" font-size="13" font-weight="700" text-anchor="middle" fill="#fff">?</text></g><path d="M333.500 85h5l-2.500 3z" fill="#222"/><path d="M369.500 85h5l-2.500 3z" fill="#c0c0c0"/><g transform="translate(671.5 78.0)"><ellipse cx="8.500" cy="4" rx="3" ry="2.500" fill="#8ab08a" stroke="#3a5a3a" stroke-width="0.800"/><path d="M2 6h6M2 9h9M2 12h5" stroke="#1a2a3a" stroke-width="1.200"/><path d="M8 9l6 2.500l-6 2.500z" fill="#a8bcd8" stroke="#5a7498" stroke-width="0.600"/></g><g transform="translate(694.0 78.0)"><path d="M8 9l6 2.500l-6 2.500l-6-2.500z" fill="#8fa8c8" stroke="#5a7498" stroke-width="0.600"/><path d="M8 6.500l6 2.500l-6 2.500l-6-2.500z" fill="#a8bcd8" stroke="#5a7498" stroke-width="0.600"/><path d="M4 5a4 3 0 1 1 7 2" stroke="#1e4e8e" stroke-width="1.800" fill="none"/><path d="M12.500 8.500l-3.500-0.500l2.500-2.500z" fill="#1e4e8e"/></g><g transform="translate(717.0 78.0)"><path d="M8 2l6 2.500l-6 2.500l-6-2.500z" fill="#a8bcd8" stroke="#5a7498" stroke-width="0.600"/><path d="M8 5l6 2.500l-6 2.500l-6-2.500z" fill="#e8d83a" stroke="#9a8a1a" stroke-width="0.600"/><path d="M8 8l6 2.500l-6 2.500l-6-2.500z" fill="#8fa8c8" stroke="#5a7498" stroke-width="0.600"/><path d="M10 11l5 4M15 15v-3M15 15h-3" stroke="#102040" stroke-width="1.200" fill="none"/></g><g transform="translate(739.5 78.0)"><path d="M8 2l6 2.500l-6 2.500l-6-2.500z" fill="#a8bcd8" stroke="#5a7498" stroke-width="0.600"/><path d="M8 5l6 2.500l-6 2.500l-6-2.500z" fill="#e8d83a" stroke="#9a8a1a" stroke-width="0.600"/><path d="M8 8l6 2.500l-6 2.500l-6-2.500z" fill="#8fa8c8" stroke="#5a7498" stroke-width="0.600"/><path d="M1 15l4-4M1 15v-3M1 15h3" stroke="#102040" stroke-width="1.200" fill="none"/></g><g transform="translate(762.5 78.0)"><path d="M8 9l6 2.500l-6 2.500l-6-2.500z" fill="#8fa8c8" stroke="#5a7498" stroke-width="0.600"/><path d="M8 6.500l6 2.500l-6 2.500l-6-2.500z" fill="#a8bcd8" stroke="#5a7498" stroke-width="0.600"/><ellipse cx="9" cy="4.500" rx="3" ry="2.500" fill="#8ab08a" stroke="#3a5a3a" stroke-width="0.800"/><path d="M1 8h5M3.500 5.500v5" stroke="#1a2a3a" stroke-width="1.200"/></g><g transform="translate(785.5 78.0)"><path d="M8 9l6 2.500l-6 2.500l-6-2.500z" fill="#8fa8c8" stroke="#5a7498" stroke-width="0.600"/><path d="M8 6.500l6 2.500l-6 2.500l-6-2.500z" fill="#a8bcd8" stroke="#5a7498" stroke-width="0.600"/><path d="M4 2v5M7 1.500v5M10 2v5" stroke="#2a3a6a" stroke-width="2"/></g><g transform="translate(815.0 78.0)"><path d="M8 9l6 2.500l-6 2.500l-6-2.500z" fill="#8fa8c8" stroke="#5a7498" stroke-width="0.600"/><path d="M8 6.500l6 2.500l-6 2.500l-6-2.500z" fill="#a8bcd8" stroke="#5a7498" stroke-width="0.600"/><path d="M7 1v8M3.500 3l7 4M10.500 3l-7 4" stroke="#5a7498" stroke-width="1.200"/></g><g transform="translate(838.0 78.0)"><path d="M8 9l6 2.500l-6 2.500l-6-2.500z" fill="#8fa8c8" stroke="#5a7498" stroke-width="0.600"/><path d="M8 6.500l6 2.500l-6 2.500l-6-2.500z" fill="#a8bcd8" stroke="#5a7498" stroke-width="0.600"/><path d="M2 12l12-9" stroke="#e02020" stroke-width="1.500"/><path d="M4 4l8 6" stroke="#e02020" stroke-width="1"/></g><g transform="translate(860.5 78.0)"><path d="M8 9l6 2.500l-6 2.500l-6-2.500z" fill="#8fa8c8" stroke="#5a7498" stroke-width="0.600"/><path d="M8 6.500l6 2.500l-6 2.500l-6-2.500z" fill="#a8bcd8" stroke="#5a7498" stroke-width="0.600"/><rect x="5" y="3.500" width="6" height="4.500" fill="#4a5a7a"/><path d="M6.500 3.500v-1.500a1.500 1.500 0 0 1 3 0v1.500" stroke="#4a5a7a" fill="none" stroke-width="1.200"/></g><g transform="translate(882.5 78.0)"><path d="M8 9l6 2.500l-6 2.500l-6-2.500z" fill="#8fa8c8" stroke="#5a7498" stroke-width="0.600"/><path d="M8 6.500l6 2.500l-6 2.500l-6-2.500z" fill="#a8bcd8" stroke="#5a7498" stroke-width="0.600"/><rect x="5" y="4" width="6" height="4.500" fill="#e8d83a" stroke="#8a7a1a" stroke-width="0.700"/><path d="M5 4v-1.500a1.500 1.500 0 0 1 3 0" stroke="#8a7a1a" fill="none" stroke-width="1.200"/></g><g transform="translate(3 3)"><rect x="0" y="0" width="16" height="16" fill="#1a8a8a"/><path d="M2 14V4l3-2v8M7 2h2v9H7zM11 2h3v5h-3z" fill="#e8f4f4"/><rect x="9.500" y="9.500" width="4.500" height="4.500" fill="none" stroke="#e8f4f4" stroke-width="1.500"/><path d="M2 11h6" stroke="#e8f4f4"/></g><g transform="translate(8 24)"><path d="M2 2h8l4 5v8H2z" fill="#2a5a8a"/><path d="M2 9l12 2v4H2z" fill="#f0d020"/><path d="M2 2l8 0l4 5l-12 4z" fill="#1a3a6a"/><path d="M1 4h5M3.500 1.500v5" stroke="#fff" stroke-width="1"/><path d="M6 6l6 5" stroke="#c8d8e8" stroke-width="1.500"/></g><g transform="translate(1798 1015)"><path d="M2 1l6 11M9 1l-6 11" stroke="#4a6a9a" stroke-width="1.400"/><path d="M4 1a3.500 3.500 0 0 1 5 2" fill="none" stroke="#4a6a9a"/><path d="M7 15l4.500-8l4.500 8z" fill="#f4e030" stroke="#5a5010" stroke-width="0.700"/><path d="M11.500 9.500v3M11.500 13.500v1" stroke="#111" stroke-width="1.300"/></g><g transform="translate(1818 1015)"><rect x="1" y="6.500" width="10" height="8.500" rx="1" fill="#e8d020" stroke="#5a4a08"/><path d="M1.500 9.500h9M1.500 12h9" stroke="#7a6a10"/><path d="M9 6.500v-3a3 3 0 0 1 6 0v1.500" stroke="#8a7a10" fill="none" stroke-width="1.600"/></g><g transform="translate(1838 1015)"><path d="M2 2h6l2 2v5h-8z" fill="#e8eef6" stroke="#8aa0c0" stroke-width="0.800"/><path d="M1 5l3 2l-3 2z" fill="#5a8ac8"/><rect x="7.500" y="7" width="8" height="8.500" fill="#f4f8fc" stroke="#3a5a8a"/><path d="M9 9.500h5M9 11.500h5M9 13.500h5" stroke="#3a5a8a" stroke-width="0.900"/></g><g transform="translate(1858 1015)"><rect x="1" y="1" width="10" height="13" fill="#2a5a8a"/><path d="M6 3v9M3 7l3-3l3 3" stroke="#e8f0f8" stroke-width="1.200" fill="none"/><circle cx="11.500" cy="11.500" r="4" fill="#4ab04a"/><path d="M9.500 11.500l1.500 2l3-4" stroke="#fff" stroke-width="1.500" fill="none"/></g><path d="M1884 1024h7.500l-3.750 4z" fill="#000"/><rect x="1901" y="1014.500" width="14.500" height="13.500" fill="#dcebf8" stroke="#2a5a9a" stroke-width="1.600"/><path d="M1790.5 418.5V100.5H1815.5" stroke="#fbfbfb" fill="none"/><path d="M1790.5 418.5H1815.5V100.5" stroke="#b8b8b8" fill="none"/><path d="M1793 103.5H1813M1793 106.5H1813" stroke="#b0b0b0"/><path d="M1793 104.5H1813M1793 107.5H1813" stroke="#fff"/><path d="M1817.5 540.5V100.5H1841.5" stroke="#fbfbfb" fill="none"/><path d="M1817.5 540.5H1841.5V100.5" stroke="#b8b8b8" fill="none"/><path d="M1820 103.5H1839M1820 106.5H1839" stroke="#b0b0b0"/><path d="M1820 104.5H1839M1820 107.5H1839" stroke="#fff"/><path d="M1843.5 488.5V100.5H1867.5" stroke="#fbfbfb" fill="none"/><path d="M1843.5 488.5H1867.5V100.5" stroke="#b8b8b8" fill="none"/><path d="M1846 103.5H1865M1846 106.5H1865" stroke="#b0b0b0"/><path d="M1846 104.5H1865M1846 107.5H1865" stroke="#fff"/><path d="M1843.5 891.5V492.5H1867.5" stroke="#fbfbfb" fill="none"/><path d="M1843.5 891.5H1867.5V492.5" stroke="#b8b8b8" fill="none"/><path d="M1846 495.5H1865M1846 498.5H1865" stroke="#b0b0b0"/><path d="M1846 496.5H1865M1846 499.5H1865" stroke="#fff"/><path d="M1869.5 762.5V100.5H1893.5" stroke="#fbfbfb" fill="none"/><path d="M1869.5 762.5H1893.5V100.5" stroke="#b8b8b8" fill="none"/><path d="M1872 103.5H1891M1872 106.5H1891" stroke="#b0b0b0"/><path d="M1872 104.5H1891M1872 107.5H1891" stroke="#fff"/><path d="M1895.5 609.5V100.5H1919.5" stroke="#fbfbfb" fill="none"/><path d="M1895.5 609.5H1919.5V100.5" stroke="#b8b8b8" fill="none"/><path d="M1898 103.5H1917M1898 106.5H1917" stroke="#b0b0b0"/><path d="M1898 104.5H1917M1898 107.5H1917" stroke="#fff"/><path d="M1895.5 891.5V612.5H1919.5" stroke="#fbfbfb" fill="none"/><path d="M1895.5 891.5H1919.5V612.5" stroke="#b8b8b8" fill="none"/><path d="M1898 615.5H1917M1898 618.5H1917" stroke="#b0b0b0"/><path d="M1898 616.5H1917M1898 619.5H1917" stroke="#fff"/><g transform="translate(1795.0 112.5)"><rect x="1.500" y="2.500" width="12" height="12" fill="#2e3a4a" stroke="#10161e"/><rect x="3" y="4" width="7" height="4" fill="#e8eef4"/><text x="7.500" y="14" font-family="Liberation Sans" font-size="6.500" font-weight="700" text-anchor="middle" fill="#fff">SYS</text><path d="M8 8l6-6.500l1.500 1.500l-6 6.500z" fill="#2a7ac8"/></g><g transform="translate(1795.0 134.5)"><rect x="1" y="2" width="3.500" height="3.500" fill="#d040d0"/><rect x="6" y="2" width="3.500" height="3.500" fill="#e8a020"/><rect x="11" y="2" width="3.500" height="3.500" fill="#4040e0"/><rect x="1" y="7" width="3.500" height="3.500" fill="#e040a0"/><rect x="6" y="7" width="3.500" height="3.500" fill="#40a040"/><circle cx="11.500" cy="10" r="3" fill="#f4e86a" stroke="#a89a30" stroke-width="0.700"/><rect x="10.500" y="13" width="2" height="2.500" fill="#8a8a6a"/></g><g transform="translate(1795.0 156.5)"><g fill="none" stroke="#8a9a8a"><rect x="1.500" y="2.500" width="3" height="3"/><rect x="6.500" y="2.500" width="3" height="3"/><rect x="11.500" y="2.500" width="3" height="3"/><rect x="1.500" y="7.500" width="3" height="3"/><rect x="6.500" y="7.500" width="3" height="3"/></g><circle cx="11.500" cy="10" r="2.800" fill="#e8e8e0" stroke="#9a9a9a" stroke-width="0.700"/><rect x="10.500" y="13" width="2" height="2.500" fill="#9a9a9a"/></g><g transform="translate(1795.0 185.0)"><circle cx="7" cy="6.500" r="6" fill="#f0642a"/><circle cx="7" cy="8" r="3.500" fill="#fbe0c8"/><path d="M3 6c1-3 7-3 8 0" fill="#e8501a"/><path d="M6 13h9" stroke="#2a8ad0" stroke-width="2"/><path d="M4 13l3-2.500v5z" fill="#2a8ad0"/><path d="M16 13l-3-2.500v5z" fill="#e02424"/></g><g transform="translate(1795.0 207.5)"><path d="M1.500 4h7v4h-7zM5 1v11" fill="none" stroke="#111" stroke-width="1.500"/><path d="M11 2h3.500M11 5h3M11 8h3.500M11 2v6" stroke="#9ab0d0" stroke-width="1.200" fill="none"/><path d="M6 13h9" stroke="#2a8ad0" stroke-width="2"/><path d="M4 13l3-2.500v5z" fill="#2a8ad0"/><path d="M16 13l-3-2.500v5z" fill="#e02424"/></g><g transform="translate(1795.0 229.5)"><text x="8" y="5.500" font-family="Liberation Sans" font-size="7" font-weight="700" text-anchor="middle" fill="#7a2a2a">m m</text><text x="8" y="15.500" font-family="Liberation Sans" font-size="7.500" font-weight="700" text-anchor="middle" fill="#111">c m</text><path d="M8 4.5V9" stroke="#e02424" stroke-width="2"/><path d="M5 7.5h6l-3 3.500z" fill="#e02424"/></g><g transform="translate(1795.0 251.0)"><rect x="1" y="2" width="14" height="3.500" fill="#1e5aa0"/><rect x="6.500" y="6.500" width="8" height="8.500" fill="#e8eef4" stroke="#1e4a7e" stroke-width="1.200"/><path d="M8 9h5M8 11h5M8 13h5" stroke="#1e4a7e"/><path d="M5 9.500l-3 2l3 2M2 11.500h3" stroke="#1e4a7e" fill="none"/></g><g transform="translate(1795.0 278.5)"><rect x="2" y="1.500" width="11.500" height="8" fill="#fdf4f4" stroke="#e02424" stroke-width="1.100"/><text x="7.800" y="8.500" font-family="Liberation Sans" font-size="7.500" font-weight="700" text-anchor="middle" fill="#e02424">A2</text><rect x="1" y="11.500" width="14" height="2" fill="#3a7ac8"/><path d="M2 13.500v2M4.500 13.500v2M7 13.500v2M9.500 13.500v2M12 13.500v2M14.500 13.500v2" stroke="#3a7ac8"/></g><g transform="translate(1795.0 302.0)"><rect x="2.500" y="2.500" width="12" height="9" fill="#dfeaf6" stroke="#1e4a7e" stroke-width="1.200"/><text x="8.500" y="10" font-family="Liberation Sans" font-size="7.500" font-weight="700" text-anchor="middle" fill="#1e4a7e">A2</text><path d="M1.500 13.500h11" stroke="#1e4a7e"/><rect x="0.500" y="12" width="3" height="3" fill="#fff" stroke="#111"/></g><g transform="translate(1795.0 329.5)"><rect x="1.500" y="1.500" width="13" height="13" rx="2" fill="#3a6aa8" stroke="#1e4a7e"/><text x="5.500" y="13" font-family="Liberation Sans" font-size="7" font-weight="700" text-anchor="middle" fill="#fff">vq</text><text x="11" y="12.500" font-family="Liberation Sans" font-size="11" font-weight="700" text-anchor="middle" fill="#fff">?</text></g><g transform="translate(1795.0 351.5)"><rect x="2" y="1.500" width="12" height="13" fill="#4a7ab8" stroke="#1e4a7e"/><rect x="4" y="3" width="8" height="4.500" fill="#e8eef4"/><text x="8" y="14" font-family="Liberation Sans" font-size="6" font-weight="700" text-anchor="middle" fill="#fff">Wrr</text></g><g transform="translate(1795.0 373.5)"><path d="M1 8l7-6.500l7 6.500" fill="none" stroke="#e0401a" stroke-width="2"/><path d="M3 8v6.500h10v-6.500l-5-4.500z" fill="#f4ead0" stroke="#b89a6a" stroke-width="0.700"/><circle cx="12" cy="12" r="3" fill="#8ac04a" stroke="#4a8a1a" stroke-width="0.700"/><rect x="5" y="10" width="3" height="4.500" fill="#b07a4a"/></g><g transform="translate(1795.0 395.5)"><rect x="1" y="1" width="6.500" height="6.500" fill="#2a5aa8"/><rect x="8.500" y="1" width="6.500" height="6.500" fill="#2a5aa8"/><rect x="1" y="8.500" width="6.500" height="6.500" fill="#2a5aa8"/><rect x="8.500" y="8.500" width="6.500" height="6.500" fill="#e02424"/><path d="M2 3h4.500M2 5.500h4.500M4 1.500v5M9.500 3h4.500M11.500 1.500v5M2 11h4.500M4 9v5.500M9.500 11.500h4.500M11.500 9v5.500" stroke="#dfe8f8" stroke-width="0.800"/></g><path d="M1793 178H1813" stroke="#b4b4b4"/><path d="M1793 179H1813" stroke="#fff"/><path d="M1793 272.5H1813" stroke="#b4b4b4"/><path d="M1793 273.5H1813" stroke="#fff"/><path d="M1793 323H1813" stroke="#b4b4b4"/><path d="M1793 324H1813" stroke="#fff"/><g transform="translate(1821.0 112.5)"><path d="M1.500 1V15M14.500 1V15M1.500 5.500H14.500" stroke="#111" stroke-width="1.300"/><path d="M1.500 5.500l3.500-1.800v3.600zM14.500 5.500l-3.500-1.800v3.600z" fill="#111"/></g><g transform="translate(1821.0 134.5)"><path d="M3.500 0.500l-3 3M15.500 10l-3.500 3.500M2 2l12 9.500" stroke="#111" stroke-width="1.300"/><path d="M2 2l4 1l-2.500 2.500zM14 11.500l-4-1l2.500-2.500z" fill="#111"/></g><g transform="translate(1821.0 156.5)"><path d="M2.500 14C3 7 7 3 13.500 2.500" stroke="#1e4a7e" stroke-width="1.500" fill="none"/><path d="M7 14c0-4 2-7 6-8" stroke="#111" stroke-width="1.200" fill="none"/><path d="M7 15l-1.500-3.500h3zM14 5.500l-3.500 0l1.500 2.500z" fill="#111"/><rect x="1.0" y="12.5" width="3" height="3" fill="#2a8ab0"/><rect x="12.0" y="1.0" width="3" height="3" fill="#2a8ab0"/></g><g transform="translate(1821.0 179.0)"><path d="M5 3.500h3l3 8h4M5 8h10M5 13h7V3.500" stroke="#111" stroke-width="1.200" fill="none"/><text x="1.500" y="8" font-family="Liberation Sans" font-size="5" fill="#111">Y</text><text x="13" y="4" font-family="Liberation Sans" font-size="5" fill="#111">x</text><circle cx="2.500" cy="12.500" r="1.200" fill="none" stroke="#1e4a7e"/><circle cx="6.500" cy="1.500" r="1.200" fill="none" stroke="#1e4a7e"/></g><g transform="translate(1821.0 206.5)"><circle cx="8" cy="8" r="6.800" fill="#f4f4f4" stroke="#4a4a4a" stroke-width="1.200"/><path d="M8 8L3.500 3.500" stroke="#111" stroke-width="1.200"/><path d="M3 3l3.500 0.800l-2.700 2.700z" fill="#111"/></g><g transform="translate(1821.0 228.5)"><path d="M3 6A6.800 6.800 0 0 1 14.500 9" fill="none" stroke="#6a6a6a" stroke-width="1.400"/><path d="M13 2.500L8.500 8H11L5 14.500" stroke="#111" stroke-width="1.400" fill="none"/><path d="M13.500 2l-1 3.700l-2.600-2.200z" fill="#111"/></g><g transform="translate(1821.0 251.0)"><circle cx="8" cy="8" r="6.800" fill="#f4f4f4" stroke="#4a4a4a" stroke-width="1.200"/><path d="M3.500 3.500l9 9" stroke="#111" stroke-width="1.200"/><path d="M3 3l3.500 0.800l-2.700 2.700zM13 13l-3.500-0.800l2.700-2.700z" fill="#111"/></g><g transform="translate(1821.0 273.0)"><path d="M1 14.500H15M1 14.500L9 2" stroke="#111" stroke-width="1.300" fill="none"/><path d="M8 3.500A10 10 0 0 1 13.500 13" stroke="#111" stroke-width="1" fill="none"/><path d="M7.500 3l3.300 0.500l-1.800 2.500zM13.800 14l-2-2.600l3-0.600z" fill="#111"/></g><g transform="translate(1821.0 300.5)"><path d="M1.500 1V15M14.500 1V15M1.500 5H14.500" stroke="#111" stroke-width="1.300"/><path d="M4 2h5l-2 4.500h3.500l-1 8.500l-3-6h-3z" fill="#f2d22a" stroke="#6a5a10" stroke-width="0.600" transform="rotate(-35 8 8)"/></g><g transform="translate(1821.0 323.0)"><path d="M1.500 1V15M8 1V10M14.500 1V5M1.500 3.500H14.500M1.500 8.500H8" stroke="#111" stroke-width="1.200"/><path d="M14.500 3.500l-3-1.500v3zM8 8.500l-3-1.500v3z" fill="#111"/></g><g transform="translate(1821.0 345.0)"><path d="M1.500 1V15M8 1V15M14.500 1V15M1.500 6H14.500" stroke="#111" stroke-width="1.200"/></g><g transform="translate(1821.0 372.0)"><path d="M1 5l5 1.500" stroke="#111" stroke-width="1.200"/><path d="M4 3l9 4l-1 7l-5-3z" fill="#f2d22a" stroke="#5a6a1a" stroke-width="0.700"/><path d="M2 4l3.500-1v3z" fill="#2a6a2a"/><text x="12.500" y="5.500" font-family="Liberation Sans" font-size="6" font-weight="700" fill="#1e4a7e">A</text></g><g transform="translate(1821.0 395.0)"><rect x="0.500" y="3.500" width="15" height="9" fill="#cfe0f2" stroke="#1e4a7e" stroke-width="1.200"/><path d="M8 3.500v9" stroke="#1e4a7e"/><circle cx="4.200" cy="8" r="2.200" fill="none" stroke="#1e4a7e"/><path d="M4.200 5v6M1.500 8h5.500" stroke="#1e4a7e" stroke-width="0.700"/><text x="11.800" y="11" font-family="Liberation Sans" font-size="7" font-weight="700" text-anchor="middle" fill="#1e4a7e">.1</text></g><g transform="translate(1821.0 416.5)"><circle cx="8" cy="8" r="6.800" fill="#f8f8f8" stroke="#4a4a4a" stroke-width="1.200"/><path d="M5 8h6M8 5v6" stroke="#111" stroke-width="1.800"/></g><g transform="translate(1821.0 445.5)"><text x="8" y="9.500" font-family="Liberation Sans" font-size="11.500" font-weight="700" text-anchor="middle" fill="#1e4a7e">A</text><path d="M1.500 9.500v5.500M14.500 9.500v5.500M1.500 12.500h13" stroke="#111" stroke-width="1.200"/><path d="M1.500 12.500l3-1.500v3zM14.500 12.500l-3-1.500v3z" fill="#111"/></g><g transform="translate(1821.0 467.5)"><path d="M1.500 9.500v5.500M14.500 9.500v5.500M1.500 12.500h13" stroke="#111" stroke-width="1.200"/><path d="M1.500 12.500l3-1.500v3zM14.500 12.500l-3-1.500v3z" fill="#111"/><path d="M5 10l7-8.500l2 1.500l-7 8.500z" fill="#e8b83a" stroke="#8a5a1a" stroke-width="0.600"/><path d="M3.500 11.500l1.500-2l1.500 1.500z" fill="#e02424"/></g><g transform="translate(1821.0 490.0)"><path d="M1.500 1V15M14.500 1V15M1.500 4.500H14.500M1.500 11H14.500" stroke="#111" stroke-width="1.200"/><rect x="4" y="6" width="8" height="3.500" fill="#9ac0e8" stroke="#1e4a7e" stroke-width="0.600"/></g><g transform="translate(1821.0 517.5)"><path d="M1.500 9.500v5.500M14.500 9.500v5.500M1.500 12.500h13" stroke="#111" stroke-width="1.200"/><path d="M1.500 12.500l3-1.500v3zM14.500 12.500l-3-1.500v3z" fill="#111"/><path d="M6 10.500l7.500-8.500l1.500 1.500l-7.500 8.500z" fill="#8a6a4a"/><path d="M3 12l2.500-3l2.500 2z" fill="#222"/></g><path d="M1819 200H1839" stroke="#b4b4b4"/><path d="M1819 201H1839" stroke="#fff"/><path d="M1819 295H1839" stroke="#b4b4b4"/><path d="M1819 296H1839" stroke="#fff"/><path d="M1819 367H1839" stroke="#b4b4b4"/><path d="M1819 368H1839" stroke="#fff"/><path d="M1819 438.5H1839" stroke="#b4b4b4"/><path d="M1819 439.5H1839" stroke="#fff"/><path d="M1819 511H1839" stroke="#b4b4b4"/><path d="M1819 512H1839" stroke="#fff"/><g transform="translate(1847.0 112.5)"><path d="M1 14.500h14" stroke="#222" stroke-width="1"/><path d="M3 12l8-10l3 2.500l-8 10z" fill="#f4ecd8" stroke="#6a5a4a" stroke-width="0.700"/><path d="M9 4.500l2-2.500l3 2.500l-2 2.500z" fill="#e8c83a" stroke="#8a6a10" stroke-width="0.600"/><path d="M3 12l2-2.500l3 2.500l-2 2.500z" fill="#9a5a4a"/></g><g transform="translate(1847.0 134.5)"><circle cx="4.500" cy="4.500" r="3" fill="#f4f4f4" stroke="#111" stroke-width="1.300"/><circle cx="8" cy="10" r="3" fill="#d8d8d8" stroke="#111" stroke-width="1.300"/><circle cx="11" cy="12" r="3" fill="#c8c8c8" stroke="#111" stroke-width="1.300"/><path d="M8 3a4 4 0 0 1 5 3" stroke="#1e4a7e" stroke-width="1.500" fill="none"/><path d="M14.500 8l-3.500-1l2.500-2.500z" fill="#1e4a7e"/></g><g transform="translate(1847.0 156.5)"><path d="M6 3V13.500H1.500zM10 3V13.500H14.500z" fill="#e8eef4" stroke="#111" stroke-width="1.200"/><path d="M8 0.500V15.500" stroke="#1e4a7e" stroke-width="1"/></g><g transform="translate(1847.0 179.0)"><path d="M1.500 13.500V9.500A2.500 2.500 0 0 1 5 7.500V6A3.500 3.500 0 0 1 12 6V8H14.500V13.500z" fill="#dfeaf6" stroke="#1e4a7e" stroke-width="1.300"/><path d="M4 11.500V10.500H7.500V6A1.200 1.200 0 0 1 9.500 6V10.500H14.500" fill="none" stroke="#1e4a7e" stroke-width="1"/></g><g transform="translate(1847.0 201.0)"><g fill="#f8f8f8" stroke="#111" stroke-width="1.300"><rect x="1.500" y="1.500" width="5" height="5"/><rect x="9.500" y="1.500" width="5" height="5"/><rect x="1.500" y="9.500" width="5" height="5"/><rect x="9.500" y="9.500" width="5" height="5"/></g></g><g transform="translate(1847.0 223.0)"><path d="M8 0.500l3 3.500h-2v3h3v-2l3.500 3l-3.500 3v-2h-3v3h2l-3 3.500l-3-3.500h2v-3h-3v2l-3.500-3l3.500-3v2h3v-3h-2z" fill="#3a6a9e" stroke="#1e4a7e" stroke-width="0.500"/></g><g transform="translate(1847.0 245.5)"><path d="M8 3A5.500 5.500 0 1 1 2.500 8.500" fill="none" stroke="#3a6a9e" stroke-width="2.200"/><path d="M9 0l-4.500 3l4.500 3z" fill="#3a6a9e"/></g><g transform="translate(1847.0 267.5)"><rect x="4.500" y="1.500" width="10" height="10" fill="#dfeaf6" stroke="#5a7aa8"/><rect x="1.500" y="7.500" width="7" height="7" fill="none" stroke="#111" stroke-dasharray="1 1" stroke-width="1.200"/></g><g transform="translate(1847.0 290.0)"><path d="M5 2L14 14H5z" fill="#cfe0f2" stroke="#5a7aa8"/><path d="M1.500 1.500H8L14.500 14.500H1.500z" fill="none" stroke="#111" stroke-width="1.300"/><path d="M5 2v12" stroke="#111" stroke-dasharray="1 1.200"/></g><g transform="translate(1847.0 311.0)"><path d="M0.500 8.500h5M10 8.500h5.500" stroke="#2a7ac8" stroke-width="1.200" stroke-dasharray="2.500 1"/><path d="M5.500 13.500l5-11" stroke="#1e4a7e" stroke-width="1.300"/></g><g transform="translate(1847.0 333.0)"><path d="M0.500 9h9" stroke="#1e4a7e" stroke-width="1.200" stroke-dasharray="3 1.200"/><path d="M10 14l4.500-11" stroke="#2a7ac8" stroke-width="1.300"/></g><g transform="translate(1847.0 355.0)"><rect x="1.500" y="4.500" width="13" height="9" fill="#dfeaf6" stroke="#111" stroke-width="1.300"/><rect x="6.500" y="3" width="3" height="3" fill="#6a8ab8" stroke="#111" stroke-width="0.600"/></g><g transform="translate(1847.0 376.5)"><path d="M5.500 4.500H1.500V13.500H14.500V4.500H10.500" fill="#dfeaf6" stroke="#111" stroke-width="1.300"/></g><g transform="translate(1847.0 398.0)"><path d="M0.500 8H6M10 8h5.500" stroke="#111" stroke-width="1.300"/><path d="M8 8l-4-2.500v5zM8 8l4-2.500v5z" fill="#1e3a5e"/></g><g transform="translate(1847.0 419.5)"><path d="M2.500 15V7L8 2.500H15" fill="none" stroke="#111" stroke-width="1.400"/><path d="M2.500 7V2.500H8" fill="none" stroke="#1e4a7e" stroke-dasharray="1 1"/></g><g transform="translate(1847.0 441.5)"><path d="M2.500 15V9A6.500 6.500 0 0 1 9 2.500H15" fill="none" stroke="#1e4a7e" stroke-width="1.500"/><path d="M2.500 9V2.500H9" fill="none" stroke="#1e4a7e" stroke-dasharray="1 1"/></g><g transform="translate(1847.0 463.5)"><path d="M2 14l5-5" stroke="#e02424" stroke-width="3"/><path d="M6 6l3-4M8 8l5-5M9 10l5-1M5 4l1-3M11 12l3 2" stroke="#e8802a" stroke-width="1.300"/><circle cx="11" cy="5" r="1.500" fill="#f0c040"/><path d="M10 7l3 2M12 2l2 1" stroke="#8a8a8a"/></g><g transform="translate(1847.0 505.5)"><path d="M2.500 1v14M0.500 11.500h8M0.500 5h5" stroke="#e02424" stroke-width="1" stroke-dasharray="2 1"/><path d="M6 12l7-9.500l2 1.500l-7 9.500z" fill="#d8a86a" stroke="#7a4a1a" stroke-width="0.600"/><path d="M4.500 14.500l1.500-2.500l2 1.500z" fill="#4a3a2a"/></g><g transform="translate(1847.0 527.5)"><path d="M4.500 0.500v15M11.500 0.500v15M0.500 4.500h15M0.500 11.500h15" stroke="#e02424" stroke-width="1.100" stroke-dasharray="2.500 1.200"/></g><g transform="translate(1847.0 554.5)"><rect x="1.500" y="6" width="13" height="3.500" fill="#3a6ac8"/></g><g transform="translate(1847.0 576.5)"><rect x="1.500" y="3" width="13" height="2.500" fill="#3a6ac8"/><rect x="1.500" y="10.500" width="13" height="2.500" fill="#3a6ac8"/><path d="M3 9l10-3M3 6l10 3" stroke="#e02424" stroke-width="1.200"/><circle cx="12" cy="10" r="2" fill="none" stroke="#e02424"/><rect x="6.500" y="0.500" width="3" height="15" fill="#3a6ac8" opacity="0.800"/></g><g transform="translate(1847.0 598.5)"><rect x="1.500" y="3" width="13" height="2.500" fill="#3a6ac8"/><rect x="1.500" y="10.500" width="13" height="2.500" fill="#3a6ac8"/><path d="M8 4.500v7" stroke="#e02424" stroke-width="1.800"/><path d="M5.500 7l2.500-2.500l2.500 2.500zM5.500 9l2.500 2.500l2.500-2.500z" fill="#e02424"/></g><g transform="translate(1847.0 620.5)"><rect x="1.500" y="11" width="13" height="3" fill="#3a6ac8"/><path d="M1.500 2.500h13" stroke="#111" stroke-width="1.200"/><path d="M8 3V8.5" stroke="#e02424" stroke-width="2"/><path d="M5 7.0h6l-3 3.500z" fill="#e02424"/></g><g transform="translate(1847.0 642.5)"><rect x="1.500" y="1" width="3" height="14" fill="#3a6ac8"/><rect x="11.500" y="1" width="3" height="14" fill="#3a6ac8"/><path d="M6.500 1v14" stroke="#111" stroke-width="1.200"/><path d="M5 5h5M5 11h5" stroke="#e02424" stroke-width="1.500"/><path d="M11.500 5l-3-2v4zM11.500 11l-3-2v4z" fill="#e02424"/></g><g transform="translate(1847.0 671.0)"><rect x="1.500" y="1.500" width="13" height="2.500" fill="#8a8a8a"/><rect x="1.500" y="12" width="13" height="2.500" fill="#3a6ac8"/><path d="M1.500 6.500h13M1.500 10h13" stroke="#e02424" stroke-width="1"/><path d="M8 3V8" stroke="#e02424" stroke-width="2"/><path d="M5 6.5h6l-3 3.500z" fill="#e02424"/></g><g transform="translate(1847.0 692.5)"><rect x="1.500" y="12" width="13" height="2.500" fill="#3a6ac8"/><path d="M2 12V7a3 3 0 0 1 6 0" fill="none" stroke="#3a6ac8" stroke-width="1.500"/><path d="M6 5l5-4l4 4l-5 5z" fill="#d8864a" stroke="#7a3a1a" stroke-width="0.600"/><path d="M8 9l4 2l-1 2z" fill="#e8b88a"/></g><g transform="translate(1847.0 720.5)"><path d="M0.500 8h15M8 0.500v15" stroke="#e02424" stroke-width="0.900"/><rect x="5" y="4" width="6" height="8" fill="#f2d22a" stroke="#3a2a0a" stroke-width="1.200"/></g><g transform="translate(1847.0 742.5)"><path d="M0.500 8h15M8 0.500v15" stroke="#e02424" stroke-width="0.900"/><circle cx="8" cy="8" r="4.500" fill="#f2d22a" stroke="#3a2a0a" stroke-width="1.200"/></g><g transform="translate(1847.0 764.5)"><path d="M0.500 8h15M8 0.500v15" stroke="#e02424" stroke-width="0.900"/><path d="M4 1.500h4v9h5.500v4H4z" fill="#f2d22a" stroke="#3a2a0a" stroke-width="1.200"/></g><g transform="translate(1847.0 786.0)"><path d="M0.500 8h15M8 0.500v15" stroke="#e02424" stroke-width="0.900"/><path d="M2 2.500h12v4h-4v8.500h-4V6.500H2z" fill="#f2d22a" stroke="#3a2a0a" stroke-width="1.200"/></g><g transform="translate(1847.0 808.5)"><path d="M0.500 8h15M8 0.500v15" stroke="#e02424" stroke-width="0.900"/><path d="M6 2h4v4h4v4h-4v4h-4v-4H2V6h4z" fill="#f2d22a" stroke="#3a2a0a" stroke-width="1.200"/></g><g transform="translate(1847.0 837.0)"><path d="M0.500 4.500h15M0.500 11.500h15M4.500 0.500v15M11.500 0.500v15" stroke="#7a1a0a" stroke-width="1"/><g fill="#f0a03a" stroke="#7a1a0a" stroke-width="1"><rect x="2.500" y="2.500" width="4" height="4"/><rect x="9.500" y="2.500" width="4" height="4"/><rect x="2.500" y="9.500" width="4" height="4"/><rect x="9.500" y="9.500" width="4" height="4"/></g></g><g transform="translate(1847.0 859.5)"><g fill="#f4f4f4" stroke="#7a7a7a" stroke-width="1"><rect x="2.500" y="1.500" width="4" height="4"/><rect x="9.500" y="1.500" width="4" height="4"/></g><g fill="#f0a03a" stroke="#7a1a0a" stroke-width="1"><rect x="2.500" y="10.500" width="4" height="4"/><rect x="9.500" y="10.500" width="4" height="4"/></g><path d="M8 3V8" stroke="#e02424" stroke-width="2"/><path d="M5 6.5h6l-3 3.500z" fill="#e02424"/></g><g transform="translate(1847.0 878.5)"><path d="M2 3v11" stroke="#111" stroke-width="1.300"/><path d="M6 6l5-4l4 4l-5 5z" fill="#d8864a" stroke="#7a3a1a" stroke-width="0.600"/><path d="M4 10l5 2l-1.500 3l-4-1z" fill="#f2d22a" stroke="#7a6a10" stroke-width="0.600"/></g><path d="M1845 548H1865" stroke="#b4b4b4"/><path d="M1845 549H1865" stroke="#fff"/><path d="M1845 664.5H1865" stroke="#b4b4b4"/><path d="M1845 665.5H1865" stroke="#fff"/><path d="M1845 714.5H1865" stroke="#b4b4b4"/><path d="M1845 715.5H1865" stroke="#fff"/><path d="M1845 830.5H1865" stroke="#b4b4b4"/><path d="M1845 831.5H1865" stroke="#fff"/><g transform="translate(1873.0 112.5)"><path d="M2.500 14V2A12 12 0 0 1 13.500 14Z" fill="#eef2f6" stroke="#1e4a7e" stroke-width="1.100"/><rect x="0.500" y="12.500" width="3" height="3" fill="#fff" stroke="#111" stroke-width="1.200"/><rect x="12.500" y="12.500" width="3" height="3" fill="#fff" stroke="#111" stroke-width="1.200"/><path d="M6 5h8M10 1v8M7 2l6 6M13 2l-6 6" stroke="#f0c040" stroke-width="0.900"/><path d="M10 5l5-5" stroke="#9a6a3a" stroke-width="1.800"/></g><g transform="translate(1873.0 134.5)"><path d="M2.500 14V2A12 12 0 0 1 13.500 14Z" fill="#eef2f6" stroke="#4a4a4a" stroke-width="1.100"/><rect x="0.500" y="12.500" width="3" height="3" fill="#fff" stroke="#111" stroke-width="1.200"/><rect x="12.500" y="12.500" width="3" height="3" fill="#fff" stroke="#111" stroke-width="1.200"/></g><g transform="translate(1873.0 156.5)"><rect x="1.500" y="9" width="13" height="4" fill="#a9cdea" stroke="#1e4a7e" stroke-width="1"/><rect x="0.500" y="8.5" width="2.500" height="5" fill="#111"/><rect x="13" y="8.5" width="2.500" height="5" fill="#111"/><path d="M5 4h8M9 0v8M6 1l6 6M12 1l-6 6" stroke="#f0c040" stroke-width="0.900"/><path d="M9 4l5-5" stroke="#9a6a3a" stroke-width="1.800"/></g><g transform="translate(1873.0 181.0)"><rect x="1.500" y="7" width="13" height="3.5" fill="#a9cdea" stroke="#1e4a7e" stroke-width="1"/><rect x="0.500" y="6.5" width="2.500" height="4.5" fill="#111"/><rect x="13" y="6.5" width="2.500" height="4.5" fill="#111"/></g><g transform="translate(1873.0 202.0)"><rect x="1.500" y="2" width="13" height="3" fill="#a9cdea" stroke="#1e4a7e" stroke-width="1"/><rect x="0.500" y="1.5" width="2.500" height="4" fill="#111"/><rect x="13" y="1.5" width="2.500" height="4" fill="#111"/><path d="M1.500 9.500h3.500v3h-3.500zM11 9.500h3.500v3h-3.500z" fill="#a9cdea" stroke="#1e4a7e"/><path d="M4 12.500v-2.500h8v2.500" fill="none" stroke="#1e4a7e" stroke-width="1.300"/><path d="M8 3V8" stroke="#e02424" stroke-width="2"/><path d="M5 6.5h6l-3 3.500z" fill="#e02424"/></g><g transform="translate(1873.0 223.5)"><path d="M4 6h8M8 2v8M5 3l6 6M11 3l-6 6" stroke="#f0c040" stroke-width="0.900"/><path d="M8 6l5-5" stroke="#9a6a3a" stroke-width="1.800"/><rect x="1" y="8" width="2.500" height="5" fill="#111"/><rect x="12.500" y="8" width="2.500" height="5" fill="#111"/><path d="M3.500 9h2M10.500 9h2M3.500 12h2M10.500 12h2" stroke="#1e4a7e"/></g><g transform="translate(1873.0 251.0)"><path d="M2.500 14V2A12 12 0 0 1 13.500 14Z" fill="#eef2f6" stroke="#1e4a7e" stroke-width="1.100"/><rect x="0.500" y="12.500" width="3" height="3" fill="#fff" stroke="#111" stroke-width="1.200"/><rect x="12.500" y="12.500" width="3" height="3" fill="#fff" stroke="#111" stroke-width="1.200"/><path d="M6 5h8M10 1v8M7 2l6 6M13 2l-6 6" stroke="#f0c040" stroke-width="0.900"/><path d="M10 5l5-5" stroke="#9a6a3a" stroke-width="1.800"/><path d="M1 13.500h3M12 13.500h3" stroke="#1e4a7e" stroke-width="2.500"/></g><g transform="translate(1873.0 273.0)"><path d="M2.500 14V2A12 12 0 0 1 13.500 14Z" fill="#eef2f6" stroke="#1e4a7e" stroke-width="1.100"/><rect x="0.500" y="12.500" width="3" height="3" fill="#fff" stroke="#111" stroke-width="1.200"/><rect x="12.500" y="12.500" width="3" height="3" fill="#fff" stroke="#111" stroke-width="1.200"/></g><g transform="translate(1873.0 295.0)"><path d="M2.500 14V2A12 12 0 0 1 13.500 14Z" fill="#eef2f6" stroke="#1e4a7e" stroke-width="1.100"/><rect x="0.500" y="12.500" width="3" height="3" fill="#fff" stroke="#111" stroke-width="1.200"/><rect x="12.500" y="12.500" width="3" height="3" fill="#fff" stroke="#111" stroke-width="1.200"/><path d="M12 0.5V5" stroke="#e02424" stroke-width="2"/><path d="M9 3.5h6l-3 3.500z" fill="#e02424"/></g><g transform="translate(1873.0 323.0)"><rect x="1.500" y="10" width="13" height="3.5" fill="#a9cdea" stroke="#1e4a7e" stroke-width="1"/><rect x="0.500" y="9.5" width="2.500" height="4.5" fill="#111"/><rect x="13" y="9.5" width="2.500" height="4.5" fill="#111"/><path d="M5 5h8M9 1v8M6 2l6 6M12 2l-6 6" stroke="#f0c040" stroke-width="0.900"/><path d="M9 5l5-5" stroke="#9a6a3a" stroke-width="1.800"/></g><g transform="translate(1873.0 347.5)"><rect x="1.500" y="7" width="13" height="3.5" fill="#a9cdea" stroke="#1e4a7e" stroke-width="1"/><rect x="0.500" y="6.5" width="2.500" height="4.5" fill="#111"/><rect x="13" y="6.5" width="2.500" height="4.5" fill="#111"/></g><g transform="translate(1873.0 367.0)"><path d="M1.500 13.500v-3h3v-3h7v3h3v3" fill="none" stroke="#1e4a7e" stroke-width="1.400"/><path d="M1.500 13.500h3.500M11 13.500h3.500" stroke="#a9cdea" stroke-width="2.500"/><path d="M8 0.5V5.5" stroke="#e02424" stroke-width="2"/><path d="M5 4.0h6l-3 3.500z" fill="#e02424"/></g><g transform="translate(1873.0 394.5)"><path d="M2 6.500h5v-3h6.500v9h-4" fill="none" stroke="#1e4a7e" stroke-width="1.400"/><rect x="1.500" y="5.500" width="4" height="2.500" fill="#a9cdea" stroke="#1e4a7e"/><rect x="8" y="11" width="4" height="2.500" fill="#f2d22a" stroke="#1e4a7e"/><path d="M7 4h8M11 0v8M8 1l6 6M14 1l-6 6" stroke="#f0c040" stroke-width="0.900"/><path d="M11 4l5-5" stroke="#9a6a3a" stroke-width="1.800"/></g><g transform="translate(1873.0 416.5)"><path d="M2 7.500h4v-3h7v9h-4" fill="none" stroke="#1e4a7e" stroke-width="1.400"/><rect x="1.500" y="6.500" width="4" height="2.500" fill="#a9cdea" stroke="#1e4a7e"/><rect x="8" y="12" width="4" height="2.500" fill="#a9cdea" stroke="#1e4a7e"/><path d="M8 0V4" stroke="#e02424" stroke-width="2"/><path d="M5 2.5h6l-3 3.500z" fill="#e02424"/></g><g transform="translate(1873.0 444.0)"><text x="8" y="7" font-family="Liberation Sans" font-size="8" font-weight="700" text-anchor="middle" fill="#e02424">Sill</text><rect x="1.500" y="10" width="13" height="3.5" fill="#a9cdea" stroke="#1e4a7e" stroke-width="1"/><rect x="0.500" y="9.5" width="2.500" height="4.5" fill="#111"/><rect x="13" y="9.5" width="2.500" height="4.5" fill="#111"/></g><g transform="translate(1873.0 466.0)"><text x="8" y="7" font-family="Liberation Sans" font-size="8" font-weight="700" text-anchor="middle" fill="#e02424">Ceil</text><rect x="1.500" y="10" width="13" height="3.5" fill="#a9cdea" stroke="#1e4a7e" stroke-width="1"/><rect x="0.500" y="9.5" width="2.500" height="4.5" fill="#111"/><rect x="13" y="9.5" width="2.500" height="4.5" fill="#111"/></g><g transform="translate(1873.0 495.0)"><rect x="1.500" y="10" width="13" height="3.5" fill="#a9cdea" stroke="#1e4a7e" stroke-width="1"/><rect x="0.500" y="9.5" width="2.500" height="4.5" fill="#111"/><rect x="13" y="9.5" width="2.500" height="4.5" fill="#111"/><path d="M2 1.500h12" stroke="#111" stroke-width="1.200"/><path d="M8 2V7.5" stroke="#e02424" stroke-width="2"/><path d="M5 6.0h6l-3 3.500z" fill="#e02424"/></g><g transform="translate(1873.0 517.0)"><rect x="1.500" y="10" width="13" height="3.5" fill="#a9cdea" stroke="#1e4a7e" stroke-width="1"/><rect x="0.500" y="9.5" width="2.500" height="4.5" fill="#111"/><rect x="13" y="9.5" width="2.500" height="4.5" fill="#111"/><path d="M4 5h6" stroke="#2a7ac8" stroke-width="2"/><path d="M13.500 5l-4-3v6z" fill="#2a7ac8"/><path d="M9 10v3.500" stroke="#111" stroke-dasharray="1 1"/></g><g transform="translate(1873.0 539.5)"><path d="M1.500 8.500h13M1.500 12h13" stroke="#1e4a7e" stroke-width="1.300"/><rect x="0.500" y="8" width="2.500" height="4.500" fill="#111"/><rect x="10" y="8" width="2.500" height="4.500" fill="#111"/><path d="M4 4h6" stroke="#2a7ac8" stroke-width="2"/><path d="M13.500 4l-4-3v6z" fill="#2a7ac8"/><path d="M3 14.500h4" stroke="#1e4a7e" stroke-width="1.500"/></g><g transform="translate(1873.0 567.0)"><rect x="1.500" y="10" width="13" height="3.5" fill="#a9cdea" stroke="#1e4a7e" stroke-width="1"/><rect x="0.500" y="9.5" width="2.500" height="4.5" fill="#111"/><rect x="13" y="9.5" width="2.500" height="4.5" fill="#111"/><rect x="1.500" y="2" width="4" height="3" fill="#9a9a9a" stroke="#5a5a5a"/><rect x="10.500" y="2" width="4" height="3" fill="#9a9a9a" stroke="#5a5a5a"/><path d="M8 1V7.5" stroke="#e02424" stroke-width="2"/><path d="M5 6.0h6l-3 3.500z" fill="#e02424"/></g><g transform="translate(1873.0 589.0)"><path d="M8 0.500l2.500 3h-1.700v3.700h3.700v-1.700l3 2.500l-3 2.500v-1.700h-3.700v3l-0.800 1.500l-0.800-1.500v-3h-3.700v1.700l-3-2.500l3-2.500v1.700h3.700v-3.700h-1.700z" fill="#3a6a9e"/><path d="M3 12l2.500 3l5-5" stroke="#e02424" stroke-width="2" fill="none"/></g><g transform="translate(1873.0 611.0)"><circle cx="5" cy="4.500" r="3" fill="#f4f4f4" stroke="#111" stroke-width="1.300"/><circle cx="11" cy="9" r="3" fill="#d0d0d0" stroke="#111" stroke-width="1.300"/><path d="M8 2a4 4 0 0 1 5 2.500" stroke="#1e4a7e" stroke-width="1.500" fill="none"/><path d="M2 11l2.500 3.500l5-5.500" stroke="#e02424" stroke-width="2" fill="none"/></g><g transform="translate(1873.0 633.0)"><path d="M7 2.500V12H2.500zM10 2.500V12H14.500z" fill="#e8eef4" stroke="#111" stroke-width="1.200"/><path d="M8.500 0.500V13" stroke="#1e4a7e"/><path d="M2 11l2.500 3.500l5-5.500" stroke="#e02424" stroke-width="2" fill="none"/></g><g transform="translate(1873.0 660.5)"><path d="M4 3a6 6 0 0 1 8 0v10a6 6 0 0 1-8 0z" fill="#f4ead8" stroke="#1e4a7e" stroke-width="1.100"/><rect x="0.500" y="6.500" width="3" height="3" fill="#a9cdea" stroke="#1e4a7e"/><rect x="12.500" y="6.500" width="3" height="3" fill="#a9cdea" stroke="#1e4a7e"/><path d="M8 5v6" stroke="#e02424" stroke-width="1.500"/><path d="M6 6.500l2-2.500l2 2.500zM6 9.500l2 2.500l2-2.500z" fill="#e02424"/></g><g transform="translate(1873.0 683.0)"><rect x="1" y="1.500" width="14" height="3.500" fill="#a9cdea" stroke="#1e4a7e"/><path d="M5 1.500v3.500M11 1.500v3.500" stroke="#1e4a7e"/><path d="M2 8v6h4" fill="none" stroke="#1e4a7e" stroke-width="1.300"/><path d="M6 11l5-4l4 3l-5 4z" fill="#d8864a" stroke="#7a3a1a" stroke-width="0.600"/></g><g transform="translate(1873.0 710.0)"><path d="M1 11h14M1 13.500h14M1 15.500h14" stroke="#2a7ac8" stroke-width="1"/><path d="M3 9l8-8l3 2.500l-8 8z" fill="#f4ecd8" stroke="#6a5a4a" stroke-width="0.700"/><path d="M9 3l2-2l3 2.500l-2 2z" fill="#e8c83a"/><path d="M3 9l2-2l3 2.500l-2 2z" fill="#4a4a4a"/></g><g transform="translate(1873.0 738.5)"><text x="8" y="7" font-family="Liberation Sans" font-size="7.500" font-weight="700" text-anchor="middle" fill="#e02424">C01</text><rect x="1.500" y="10" width="13" height="3" fill="#a9cdea" stroke="#1e4a7e" stroke-width="1"/><rect x="0.500" y="9.5" width="2.500" height="4" fill="#111"/><rect x="13" y="9.5" width="2.500" height="4" fill="#111"/></g><path d="M1871 245H1891" stroke="#b4b4b4"/><path d="M1871 246H1891" stroke="#fff"/><path d="M1871 317H1891" stroke="#b4b4b4"/><path d="M1871 318H1891" stroke="#fff"/><path d="M1871 388.5H1891" stroke="#b4b4b4"/><path d="M1871 389.5H1891" stroke="#fff"/><path d="M1871 438H1891" stroke="#b4b4b4"/><path d="M1871 439H1891" stroke="#fff"/><path d="M1871 488.5H1891" stroke="#b4b4b4"/><path d="M1871 489.5H1891" stroke="#fff"/><path d="M1871 561H1891" stroke="#b4b4b4"/><path d="M1871 562H1891" stroke="#fff"/><path d="M1871 655H1891" stroke="#b4b4b4"/><path d="M1871 656H1891" stroke="#fff"/><path d="M1871 704.5H1891" stroke="#b4b4b4"/><path d="M1871 705.5H1891" stroke="#fff"/><path d="M1871 732H1891" stroke="#b4b4b4"/><path d="M1871 733H1891" stroke="#fff"/><g transform="translate(1899.5 112.5)"><rect x="1" y="1.500" width="14" height="13" fill="#ee8e7e" stroke="#16305e" stroke-width="1.800"/><path d="M3 5h4M5 3v10M3.500 9l1.500-3l1.500 2.500M8.500 4h5v8l-1.500-0.500M9 4l-0.500 3M10 7l1.500 2.500l-2 0.500" stroke="#d01818" stroke-width="1.400" fill="none"/></g><g transform="translate(1899.5 139.5)"><path d="M1 3.500h4l5 4h5v3h-5l-5-4h-4z" fill="#3cd6e6" stroke="#14506a" stroke-width="0.900"/><path d="M1 9h3.500l5 4h5.500M1 11h3l5 4h6" stroke="#14506a" stroke-width="1" fill="none"/></g><g transform="translate(1899.5 162.5)"><rect x="1.500" y="1.500" width="5.500" height="13" fill="#f4f8fb" stroke="#1e5a7e" stroke-width="1.200"/><rect x="9" y="1.500" width="5.500" height="13" fill="#f4f8fb" stroke="#1e5a7e" stroke-width="1.200"/><path d="M2 4.500h4.500M2 7.500h4.500M2 10.500h4.500M9.500 4.500h4.500M9.500 7.500h4.500M9.500 10.500h4.500" stroke="#1e5a7e" stroke-width="1.300"/></g><g transform="translate(1899.5 185.0)"><path d="M1.500 1.500A13 13 0 0 1 14.500 14.500H9.500A8 8 0 0 0 1.500 6.500z" fill="#e4e8ec" stroke="#4a5a6a" stroke-width="1.200"/><path d="M6 2.500l-1.500 4.500M10.500 5.500l-3.500 3M13.500 10l-4.500 1.500" stroke="#8a9aaa"/></g><g transform="translate(1899.5 207.5)"><rect x="4" y="2.500" width="8" height="8" fill="#f6f8fa" stroke="#1e5a7e" stroke-width="1.100"/><path d="M4 2.500l8 8M12 2.500l-8 8" stroke="#1e5a7e" stroke-width="0.900"/><path d="M4.500 0.500h-3v14.500h13v-14.500h-3" fill="none" stroke="#1e5a7e" stroke-width="1.200"/><path d="M4.500 12.500h7" stroke="#1e5a7e" stroke-width="1.300"/></g><g transform="translate(1899.5 235.0)"><rect x="3.500" y="1.500" width="9" height="13" fill="#e8eef2" stroke="#2a4a4a" stroke-width="1.600"/><path d="M5 3l5 5l-5 5" fill="none" stroke="#5a6a6a"/></g><g transform="translate(1899.5 257.0)"><rect x="1" y="2" width="14" height="2.500" fill="#8ab0e0" stroke="#1e4a7e" stroke-width="0.700"/><rect x="3.500" y="4.500" width="2.500" height="10.500" fill="#cfe0f2" stroke="#1e4a7e" stroke-width="0.800"/><rect x="10" y="4.500" width="2.500" height="10.500" fill="#3a7ac8" stroke="#1e4a7e" stroke-width="0.800"/></g><g transform="translate(1899.5 279.5)"><path d="M4 1.500h8v3h-2.500v7H12v3H4v-3h2.500v-7H4z" fill="#cfe0f2" stroke="#111" stroke-width="1.800"/><path d="M1.500 6v4" stroke="#111" stroke-width="2.500"/></g><g transform="translate(1899.5 302.0)"><rect x="1.500" y="2" width="13" height="12.500" fill="#dfeaf6" stroke="#2a4a5a" stroke-width="1.600"/><path d="M1.500 5.500h13M8 5.500v9" stroke="#2a4a5a" stroke-width="1.500"/></g><g transform="translate(1899.5 323.0)"><path d="M5.500 1.500h5M5.500 14.500h5" stroke="#111" stroke-width="2"/><rect x="6.500" y="2" width="3" height="12" fill="#3a7ac8" stroke="#111" stroke-width="1"/><path d="M7 5l2 2M7 9l2 2" stroke="#fff"/></g><g transform="translate(1899.5 345.0)"><path d="M6 1l4 2l-4 2l4 2l-4 2l4 2l-4 2l4 2" fill="none" stroke="#3a5a8a" stroke-width="1.500"/></g><g transform="translate(1899.5 365.5)"><path d="M1 3.500h14M1 7h14M1 10.500h14M1 14h14" stroke="#1e5a7e" stroke-width="1.400"/><rect x="5" y="5" width="6" height="4" fill="#9a9a9a"/></g><g transform="translate(1899.5 394.0)"><rect x="2" y="5.500" width="12" height="9" fill="#dfeaf6" stroke="#1e5a7e" stroke-width="1.500"/><path d="M8 5.500v9M2 9.500h12" stroke="#1e5a7e" stroke-width="1.200"/><path d="M1 3.500v-2h3" fill="none" stroke="#5a9ab8"/><path d="M8 0.5V6" stroke="#e02424" stroke-width="2"/><path d="M5 4.5h6l-3 3.500z" fill="#e02424"/></g><g transform="translate(1899.5 417.5)"><text transform="translate(5 14) rotate(-90)" font-family="Liberation Sans" font-size="6.500" font-weight="700" fill="#111">C101</text><rect x="8.500" y="7" width="6" height="7.500" fill="#f4f8fc" stroke="#1e5a7e" stroke-width="1.300"/><path d="M8 3.500h5v2" fill="none" stroke="#e02424"/><path d="M11.500 4.500l1.500 2l1.500-2z" fill="#e02424"/></g><g transform="translate(1899.5 438.5)"><rect x="2" y="2" width="12" height="12" fill="#f4f8fc" stroke="#1e3a4e" stroke-width="1.600"/><path d="M6 2v12M10 2v12M2 8h12" stroke="#1e3a4e" stroke-width="1.400"/></g><g transform="translate(1899.5 461.0)"><rect x="1.500" y="2.500" width="13" height="3.500" fill="#a9cdea" stroke="#111" stroke-width="1"/><rect x="1.500" y="10" width="13" height="3.500" fill="#a9cdea" stroke="#111" stroke-width="1"/><rect x="0.500" y="2" width="3" height="4.500" fill="#111"/><rect x="12.500" y="2" width="3" height="4.500" fill="#111"/><rect x="0.500" y="9.500" width="3" height="4.500" fill="#111"/><rect x="12.500" y="9.500" width="3" height="4.500" fill="#111"/></g><g transform="translate(1899.5 483.0)"><path d="M1 2.500h14M1 5h14M2 14.500h12" stroke="#1e5a7e" stroke-width="1.300"/><path d="M3.500 5v9.500M6.500 5v9.500M9.500 5v9.500M12.500 5v9.500" stroke="#1e5a7e" stroke-width="1.300"/></g><g transform="translate(1899.5 510.5)"><path d="M1.500 4l13 6l-13 4" fill="none" stroke="#f2d22a" stroke-width="3"/><path d="M2 2.500l12 4l-12 5.500l12 2.500" fill="none" stroke="#111" stroke-width="1.200"/></g><g transform="translate(1899.5 533.5)"><path d="M1 11l14-5M1 8l14-3" stroke="#e02424" stroke-width="1"/><path d="M4 3v12M7.500 2v12M11 1.500v12M14 1v12" stroke="#b04a2a" stroke-width="1.200"/></g><g transform="translate(1899.5 560.5)"><path d="M1.500 13.500h6a6 6 0 0 0 6-6v-6" fill="none" stroke="#1e5a7e" stroke-width="1.300"/><path d="M1.500 11h5a4 4 0 0 0 4-4v-3" fill="none" stroke="#1e5a7e" stroke-width="2.500"/><path d="M2 3.500h6" stroke="#111"/><path d="M5 3.5V7.5" stroke="#e02424" stroke-width="2"/><path d="M2 6.0h6l-3 3.500z" fill="#e02424"/></g><g transform="translate(1899.5 582.5)"><path d="M1.500 14h7a5.500 5.500 0 0 0 5.500-5.500v-6" fill="none" stroke="#5a5a5a" stroke-width="1.200"/><path d="M1.500 11.500h6a3.500 3.500 0 0 0 3.500-3.500v-4" fill="none" stroke="#5a5a5a" stroke-width="1"/><path d="M2 3h6" stroke="#111"/><path d="M5 3V7.5" stroke="#e02424" stroke-width="2"/><path d="M2 6.0h6l-3 3.500z" fill="#e02424"/></g><path d="M1897.5 134H1917.5" stroke="#b4b4b4"/><path d="M1897.5 135H1917.5" stroke="#fff"/><path d="M1897.5 228.5H1917.5" stroke="#b4b4b4"/><path d="M1897.5 229.5H1917.5" stroke="#fff"/><path d="M1897.5 388.5H1917.5" stroke="#b4b4b4"/><path d="M1897.5 389.5H1917.5" stroke="#fff"/><path d="M1897.5 504.5H1917.5" stroke="#b4b4b4"/><path d="M1897.5 505.5H1917.5" stroke="#fff"/><path d="M1897.5 555H1917.5" stroke="#b4b4b4"/><path d="M1897.5 556H1917.5" stroke="#fff"/><g transform="translate(1899.5 623.5)"><rect x="1" y="1.500" width="14" height="13" fill="#f8d8d0" stroke="#1e3a8e" stroke-width="1.600"/><path d="M3 4h4M5 2.500v4M9 3h4M11 2.500v4M3 7.500h10M8 7.500v6M4 10l4 1.500l4-1.500M4 13.500l4-1.500l4 1.500" stroke="#e02424" stroke-width="1.200" fill="none"/></g><g transform="translate(1899.5 650.5)"><rect x="1" y="1.500" width="14" height="3" fill="#9a4a42"/><rect x="3" y="4.500" width="10" height="10" fill="#f8f0ee" stroke="#9a4a42" stroke-width="1.500"/><path d="M4 10l7-5" stroke="#9a4a42"/><path d="M2 15h12" stroke="#9a4a42" stroke-width="1.500"/></g><g transform="translate(1899.5 673.5)"><path d="M1.500 15V2l3 6l3-5v12M8.500 15V9a2.500 2.500 0 0 1 5 0v6M14.500 15V2" fill="none" stroke="#2a7ac8" stroke-width="1.300"/><path d="M1 15h15" stroke="#2a7ac8"/></g><g transform="translate(1899.5 700.5)"><path d="M1 2.500h14M1 6h14M1 11.500h14" stroke="#2a6ab8" stroke-width="1.300"/><path d="M3.500 6v5.500M6 6l1.500 5.500M9 6v5.500M11 6l1.500 5.500M14 6v5.500" stroke="#2a6ab8" stroke-width="1.200"/></g><g transform="translate(1899.5 723.5)"><path d="M1 11c1-8 4-8 5-2s3 6 4 0h5" fill="none" stroke="#2a5ab8" stroke-width="1.500"/><path d="M12 6v3h3" fill="none" stroke="#2a5ab8"/></g><g transform="translate(1899.5 745.5)"><path d="M1 2h13.500v13M1 5h10.500v10M1 8h7.500v7" fill="none" stroke="#2a7ac8" stroke-width="1.500"/></g><g transform="translate(1899.5 767.5)"><rect x="1" y="4" width="14" height="8" fill="#f8f0ee" stroke="#9a4a42" stroke-width="1.200"/><path d="M8 4v8M1 4l7 8M8 4l-7 8M8 4l7 8M15 4l-7 8" stroke="#c8a49e" stroke-width="0.900"/></g><g transform="translate(1899.5 789.0)"><rect x="1.500" y="1.500" width="13" height="13" fill="#f8f0ee" stroke="#9a4a42" stroke-width="1.600"/><path d="M1.500 5h13M8 5v9.500" stroke="#9a4a42" stroke-width="1.300"/><path d="M3 7l4 6M9.500 7l4 6" stroke="#c8a49e"/></g><g transform="translate(1899.5 816.5)"><path d="M2 1v13h13" fill="none" stroke="#111" stroke-width="1.300"/><path d="M2 1l7 7l6-4" fill="none" stroke="#111" stroke-width="1.300"/><path d="M4 9l5 5h5l-5-6z" fill="#f0e060" opacity="0.900"/><path d="M5 11l3 3M8 9l4 5" stroke="#8a8a2a" stroke-width="0.700"/></g><g transform="translate(1899.5 839.0)"><rect x="1.500" y="1.500" width="13" height="13" fill="#f2d22a"/><rect x="9" y="1.500" width="5.500" height="7" fill="#f8f4e0"/><path d="M9 1.500v13M1.500 8.500h13" stroke="#3a3a1a" stroke-width="1.200"/><path d="M3 10l4 4M7 10l-4 4" stroke="#6a5a1a" stroke-width="0.900"/></g><g transform="translate(1899.5 862.0)"><path d="M1 1.500h14M1 4.500h14M1 7.500h14M1 10.500h14M1 13.500h14" stroke="#1a1a0a" stroke-width="1.800"/><path d="M1 3h14M1 6h14M1 9h14M1 12h14" stroke="#f0d870" stroke-width="0.900"/></g><path d="M1897.5 644.5H1917.5" stroke="#b4b4b4"/><path d="M1897.5 645.5H1917.5" stroke="#fff"/><path d="M1897.5 695H1917.5" stroke="#b4b4b4"/><path d="M1897.5 696H1917.5" stroke="#fff"/><path d="M1897.5 810H1917.5" stroke="#b4b4b4"/><path d="M1897.5 811H1917.5" stroke="#fff"/></svg>
</body></html>
